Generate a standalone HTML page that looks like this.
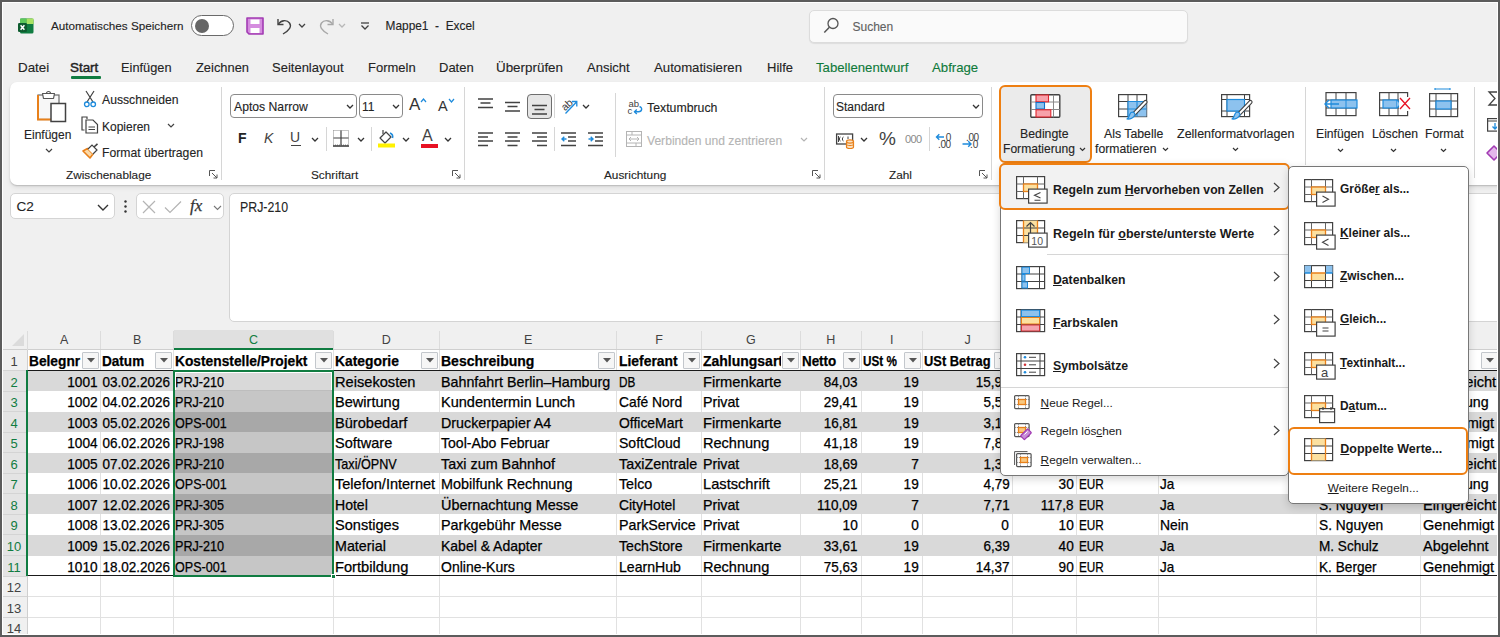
<!DOCTYPE html>
<html><head><meta charset="utf-8">
<style>
*{box-sizing:border-box;margin:0;padding:0}
html,body{width:1500px;height:637px;overflow:hidden;background:#F0F0F0;font-family:"Liberation Sans",sans-serif;color:#242424}
.a{position:absolute;white-space:nowrap}
.t12{font-size:12px;line-height:16px}
.t13{font-size:13px;line-height:15px}
svg{position:absolute;overflow:visible}
.g .a{-webkit-text-stroke:0.25px currentColor}
.t12,.tab,.glab{-webkit-text-stroke:0.12px currentColor}
#frame{position:absolute;left:0;top:0;width:1500px;height:637px;border:2px solid #5c5c5c;z-index:100;pointer-events:none}
#frame:after{content:"";position:absolute;left:0;top:0;right:0;bottom:0;border:1px solid #fff}
.tab{position:absolute;top:59px;font-size:13px;line-height:17px;color:#242424}
.rib{position:absolute;left:9.5px;top:82px;width:1520px;height:103px;background:#fff;border-radius:7px;box-shadow:0 1px 1.5px rgba(0,0,0,.18),0 3px 5px rgba(0,0,0,.07)}
.sep{position:absolute;width:1px;background:#D6D6D6}
.glab{position:absolute;top:168px;font-size:11.8px;line-height:15px;color:#242424}
.chev{position:absolute}
</style></head><body>
<div id="frame"></div>

<!-- ===== TITLE BAR ===== -->
<svg style="left:18px;top:18px" width="16" height="16" viewBox="0 0 16 16">
  <rect x="2" y="0.5" width="13.5" height="15" rx="1.5" fill="#107C41"/>
  <rect x="2" y="0.5" width="6.5" height="5.5" fill="#5CC85A"/>
  <rect x="8.5" y="0.5" width="7" height="5.5" fill="#A9E364"/>
  <rect x="8.5" y="6" width="7" height="9.5" fill="#21A366" opacity="0"/>
  <rect x="0" y="5" width="9" height="9" rx="1.3" fill="#0E5C2F"/>
  <path d="M2.6 7.2 L6.4 11.8 M6.4 7.2 L2.6 11.8" stroke="#fff" stroke-width="1.5"/>
</svg>
<div class="a t12" style="left:51px;top:18px;font-size:11.7px">Automatisches Speichern</div>
<div class="a" style="left:191px;top:15px;width:43px;height:21px;border:1.3px solid #6a6a6a;border-radius:11px;background:#fff"></div>
<div class="a" style="left:195px;top:18.5px;width:14px;height:14px;border-radius:7px;background:#666"></div>
<!-- save -->
<svg style="left:246px;top:17px" width="18" height="18" viewBox="0 0 18 18">
  <path d="M1 1 H17 V17 H3 L1 15 Z" fill="#D58CDF" stroke="#A23BB3" stroke-width="1.6" stroke-linejoin="round"/>
  <rect x="4.5" y="2.5" width="9" height="4.5" fill="#fff"/>
  <rect x="4.5" y="11" width="9" height="5" fill="#fff"/>
</svg>
<!-- undo -->
<svg style="left:276px;top:17px" width="18" height="18" viewBox="0 0 18 18">
  <path d="M2 2 V7.5 H7.5" fill="none" stroke="#424242" stroke-width="1.4"/>
  <path d="M2.5 7 C5 3 11 2.5 13.5 6 C16 9.5 13.5 13 7 17" fill="none" stroke="#424242" stroke-width="1.4"/>
</svg>
<svg style="left:298px;top:23px" width="8" height="5" viewBox="0 0 8 5"><path d="M1 1 L4 4 L7 1" fill="none" stroke="#424242" stroke-width="1.3"/></svg>
<!-- redo -->
<svg style="left:317px;top:17px" width="18" height="18" viewBox="0 0 18 18">
  <path d="M16 2 V7.5 H10.5" fill="none" stroke="#A8A8A8" stroke-width="1.4"/>
  <path d="M15.5 7 C13 3 7 2.5 4.5 6 C2 9.5 4.5 13 11 17" fill="none" stroke="#A8A8A8" stroke-width="1.4"/>
</svg>
<svg style="left:338px;top:23px" width="8" height="5" viewBox="0 0 8 5"><path d="M1 1 L4 4 L7 1" fill="none" stroke="#B8B8B8" stroke-width="1.3"/></svg>
<svg style="left:360px;top:22px" width="10" height="9" viewBox="0 0 10 9"><path d="M1 1 H9" stroke="#424242" stroke-width="1.3"/><path d="M1.5 3.5 L5 7 L8.5 3.5" fill="none" stroke="#424242" stroke-width="1.3"/></svg>
<div class="a t12" style="left:385.5px;top:18px;font-size:11.9px">Mappe1&nbsp; -&nbsp; Excel</div>
<!-- search -->
<div class="a" style="left:809px;top:10px;width:379px;height:33px;background:#FAFAFA;border:1px solid #DCDCDC;border-radius:5px;box-shadow:0 1px 1px rgba(0,0,0,.08)"></div>
<svg style="left:823px;top:17px" width="16" height="17" viewBox="0 0 16 17"><circle cx="10" cy="6.5" r="5" fill="none" stroke="#555" stroke-width="1.3"/><path d="M6.4 10.2 L1.3 15.5" stroke="#555" stroke-width="1.5"/></svg>
<div class="a t12" style="left:852.5px;top:19px;color:#616161;font-size:12px">Suchen</div>

<!-- ===== TABS ===== -->
<div class="tab" style="left:18px;font-size:13.4px">Datei</div>
<div class="tab" style="left:70px;font-size:13.4px;-webkit-text-stroke:0.45px currentColor">Start</div>
<div class="a" style="left:71px;top:76px;width:30px;height:2.5px;background:#107C41;border-radius:1px"></div>
<div class="tab" style="left:121px;font-size:12.8px">Einfügen</div>
<div class="tab" style="left:196px;font-size:12.9px">Zeichnen</div>
<div class="tab" style="left:272px;font-size:13px">Seitenlayout</div>
<div class="tab" style="left:368px;font-size:13px">Formeln</div>
<div class="tab" style="left:439px;font-size:13px">Daten</div>
<div class="tab" style="left:496px;font-size:13.4px">Überprüfen</div>
<div class="tab" style="left:587px;font-size:13px">Ansicht</div>
<div class="tab" style="left:654px;font-size:13.2px">Automatisieren</div>
<div class="tab" style="left:767px;font-size:13px">Hilfe</div>
<div class="tab" style="left:816px;font-size:13.2px;color:#0E7A3A">Tabellenentwurf</div>
<div class="tab" style="left:932px;font-size:13.2px;color:#0E7A3A">Abfrage</div>

<!-- ===== RIBBON ===== -->
<div class="rib"></div>
<!-- Zwischenablage -->
<svg style="left:36px;top:89px" width="31" height="34" viewBox="0 0 31 34">
  <rect x="2" y="6" width="21" height="24.5" fill="#F7F7F7" stroke="#6a6a6a" stroke-width="1.2"/>
  <path d="M2 6 V30.5 H15" fill="none" stroke="#E8801A" stroke-width="2"/>
  <path d="M6.5 4.5 H18.5 L17.5 9.5 H7.5 Z" fill="#fff" stroke="#555" stroke-width="1.2" stroke-linejoin="round"/>
  <path d="M10.5 4.5 A2 2 0 0 1 14.5 4.5" fill="none" stroke="#555" stroke-width="1.2"/>
  <rect x="15" y="14.5" width="14.5" height="18" fill="#fff" stroke="#424242" stroke-width="1.5"/>
</svg>
<div class="a t12" style="left:24px;top:127px;font-size:12px">Einfügen</div>
<svg class="chev" style="left:45px;top:148px" width="8" height="5" viewBox="0 0 8 5"><path d="M1 1 L4 4 L7 1" fill="none" stroke="#424242" stroke-width="1.2"/></svg>
<svg style="left:83px;top:90px" width="14" height="18" viewBox="0 0 14 18">
  <path d="M3 1 L10 12 M11 1 L4 12" stroke="#424242" stroke-width="1.2"/>
  <circle cx="3.8" cy="14.3" r="2.3" fill="none" stroke="#1E8BDC" stroke-width="1.3"/>
  <circle cx="10.2" cy="14.3" r="2.3" fill="none" stroke="#1E8BDC" stroke-width="1.3"/>
</svg>
<div class="a t12" style="left:102px;top:92px;font-size:12.2px">Ausschneiden</div>
<svg style="left:81px;top:116px" width="18" height="18" viewBox="0 0 18 18">
  <path d="M6 3 V1 H1 V14 H3.5" fill="none" stroke="#424242" stroke-width="1.2"/>
  <path d="M5 4 H12 L16.5 8.5 V17 H5 Z" fill="#fff" stroke="#424242" stroke-width="1.2"/>
  <path d="M7.5 11 H14 M7.5 13.5 H14" stroke="#424242" stroke-width="1"/>
</svg>
<div class="a t12" style="left:102px;top:119px">Kopieren</div>
<svg class="chev" style="left:167px;top:123px" width="8" height="5" viewBox="0 0 8 5"><path d="M1 1 L4 4 L7 1" fill="none" stroke="#424242" stroke-width="1.2"/></svg>
<svg style="left:82px;top:143px" width="17" height="16" viewBox="0 0 17 16">
  <path d="M1 8 L8 15 L11 11 L5.5 5.5 Z" fill="#FBD9A8" stroke="#E8801A" stroke-width="1.6" stroke-linejoin="round"/>
  <path d="M6 6 L10 2 L15 7 L11 11" fill="#fff" stroke="#424242" stroke-width="1.2"/>
  <path d="M12 4 L15.5 0.8" stroke="#424242" stroke-width="1.6"/>
</svg>
<div class="a t12" style="left:102px;top:145px;font-size:12.2px">Format übertragen</div>
<div class="glab" style="left:66px">Zwischenablage</div>
<svg style="left:209px;top:170px" width="9" height="9" viewBox="0 0 9 9"><path d="M0.5 6 V0.5 H6 M3 3 L8 8 M8 4.5 V8 H4.5" fill="none" stroke="#555" stroke-width="1"/></svg>
<div class="sep" style="left:221px;top:87px;height:93px"></div>

<!-- Schriftart -->
<div class="a" style="left:230px;top:94px;width:127px;height:24px;border:1px solid #8a8a8a;border-radius:4px;background:#fff"></div>
<div class="a t12" style="left:234px;top:99px;font-size:12.2px">Aptos Narrow</div>
<svg class="chev" style="left:346px;top:104px" width="8" height="5" viewBox="0 0 8 5"><path d="M1 1 L4 4 L7 1" fill="none" stroke="#333" stroke-width="1.3"/></svg>
<div class="a" style="left:359px;top:94px;width:44px;height:24px;border:1px solid #8a8a8a;border-radius:4px;background:#fff"></div>
<div class="a t12" style="left:362px;top:99px">11</div>
<svg class="chev" style="left:392px;top:104px" width="8" height="5" viewBox="0 0 8 5"><path d="M1 1 L4 4 L7 1" fill="none" stroke="#333" stroke-width="1.3"/></svg>
<div class="a" style="left:409px;top:95px;font-size:17px;line-height:19px;color:#333">A</div>
<svg style="left:420px;top:98px" width="7" height="5" viewBox="0 0 7 5"><path d="M1 4 L3.5 1 L6 4" fill="none" stroke="#1E8BDC" stroke-width="1.2"/></svg>
<div class="a" style="left:438px;top:98px;font-size:14.5px;line-height:16px;color:#333">A</div>
<svg style="left:448px;top:98px" width="7" height="5" viewBox="0 0 7 5"><path d="M1 1 L3.5 4 L6 1" fill="none" stroke="#1E8BDC" stroke-width="1.2"/></svg>
<div class="a" style="left:238px;top:130px;font-size:14px;line-height:16px;font-weight:bold;color:#242424">F</div>
<div class="a" style="left:264px;top:130px;font-size:14px;line-height:16px;font-style:italic;color:#424242">K</div>
<div class="a" style="left:290px;top:129px;font-size:14px;line-height:16px;color:#424242">U</div>
<div class="a" style="left:291px;top:145px;width:10px;height:1.3px;background:#424242"></div>
<svg class="chev" style="left:311px;top:137px" width="8" height="5" viewBox="0 0 8 5"><path d="M1 1 L4 4 L7 1" fill="none" stroke="#333" stroke-width="1.3"/></svg>
<div class="sep" style="left:326px;top:127px;height:24px"></div>
<svg style="left:333px;top:130px" width="16" height="17" viewBox="0 0 16 17">
  <path d="M0.5 0.5 H15.5 V15 H0.5 Z" fill="none" stroke="#8a8a8a" stroke-width="1" stroke-dasharray="1 1"/>
  <path d="M8 0.5 V15 M0.5 8 H15.5" stroke="#424242" stroke-width="1.2"/>
  <path d="M0 16 H16" stroke="#424242" stroke-width="1.6"/>
</svg>
<svg class="chev" style="left:357px;top:137px" width="8" height="5" viewBox="0 0 8 5"><path d="M1 1 L4 4 L7 1" fill="none" stroke="#333" stroke-width="1.3"/></svg>
<div class="sep" style="left:371px;top:127px;height:24px"></div>
<svg style="left:378px;top:129px" width="17" height="19" viewBox="0 0 17 19">
  <path d="M2 9 L8 3 L13 8 L7 14 Z" fill="#fff" stroke="#424242" stroke-width="1.2" stroke-linejoin="round"/>
  <path d="M5 5 L5 1" stroke="#424242" stroke-width="1.2"/>
  <path d="M12 4 C14.5 5 15 7 14.5 9" fill="none" stroke="#1E8BDC" stroke-width="1.6"/>
  <rect x="0" y="14.5" width="17" height="4" fill="#FFF100"/>
</svg>
<svg class="chev" style="left:402px;top:137px" width="8" height="5" viewBox="0 0 8 5"><path d="M1 1 L4 4 L7 1" fill="none" stroke="#333" stroke-width="1.3"/></svg>
<div class="a" style="left:422px;top:127px;font-size:16px;line-height:18px;color:#424242">A</div>
<div class="a" style="left:421px;top:143.5px;width:17px;height:4px;background:#E81123"></div>
<svg class="chev" style="left:444px;top:137px" width="8" height="5" viewBox="0 0 8 5"><path d="M1 1 L4 4 L7 1" fill="none" stroke="#333" stroke-width="1.3"/></svg>
<div class="glab" style="left:311px">Schriftart</div>
<svg style="left:452px;top:170px" width="9" height="9" viewBox="0 0 9 9"><path d="M0.5 6 V0.5 H6 M3 3 L8 8 M8 4.5 V8 H4.5" fill="none" stroke="#555" stroke-width="1"/></svg>
<div class="sep" style="left:464px;top:87px;height:93px"></div>

<!-- Ausrichtung -->
<svg style="left:478px;top:98px" width="16" height="12" viewBox="0 0 16 12"><path d="M0 1 H15 M2.5 5 H12.5 M0 9.5 H15" stroke="#424242" stroke-width="1.4"/></svg>
<svg style="left:505px;top:101px" width="16" height="12" viewBox="0 0 16 12"><path d="M0 1.5 H15 M2.5 5.5 H12.5 M0 10 H15" stroke="#424242" stroke-width="1.4"/></svg>
<div class="a" style="left:527px;top:94px;width:25px;height:25px;border:1.3px solid #6e6e6e;border-radius:4px;background:#E6E6E6"></div>
<svg style="left:532px;top:104px" width="16" height="12" viewBox="0 0 16 12"><path d="M0 1.5 H15 M2.5 5.5 H12.5 M0 10 H15" stroke="#424242" stroke-width="1.4"/></svg>
<div class="sep" style="left:554px;top:94px;height:24px"></div>
<svg style="left:560px;top:97px" width="20" height="18" viewBox="0 0 20 18">
  <text x="1" y="12" font-size="10.5" font-family="Liberation Sans" fill="#424242" transform="rotate(-42 6 8)">ab</text>
  <path d="M5.5 16.5 L16.5 5 M12 4.5 H16.8 V9.5" fill="none" stroke="#1E8BDC" stroke-width="1.3"/>
</svg>
<svg class="chev" style="left:582px;top:104px" width="8" height="5" viewBox="0 0 8 5"><path d="M1 1 L4 4 L7 1" fill="none" stroke="#333" stroke-width="1.3"/></svg>
<svg style="left:478px;top:131.5px" width="16" height="15" viewBox="0 0 16 15"><path d="M0 1 H15 M0 5 H10 M0 9 H15 M0 13.5 H10" stroke="#424242" stroke-width="1.4"/></svg>
<svg style="left:505px;top:131.5px" width="16" height="15" viewBox="0 0 16 15"><path d="M0 1 H15 M2.5 5 H12.5 M0 9 H15 M2.5 13.5 H12.5" stroke="#424242" stroke-width="1.4"/></svg>
<svg style="left:532px;top:131.5px" width="16" height="15" viewBox="0 0 16 15"><path d="M0 1 H15 M5 5 H15 M0 9 H15 M5 13.5 H15" stroke="#424242" stroke-width="1.4"/></svg>
<div class="sep" style="left:554px;top:127px;height:24px"></div>
<svg style="left:561px;top:131.5px" width="16" height="15" viewBox="0 0 16 15"><path d="M0 1 H15 M7 5 H15 M7 9 H15 M0 13.5 H15" stroke="#424242" stroke-width="1.4"/><path d="M5.5 7 H1 M3.3 4.8 L1 7 L3.3 9.2" fill="none" stroke="#1E8BDC" stroke-width="1.4"/></svg>
<svg style="left:588px;top:131.5px" width="16" height="15" viewBox="0 0 16 15"><path d="M0 1 H15 M7 5 H15 M7 9 H15 M0 13.5 H15" stroke="#424242" stroke-width="1.4"/><path d="M0.5 7 H5 M2.7 4.8 L5 7 L2.7 9.2" fill="none" stroke="#1E8BDC" stroke-width="1.4"/></svg>
<div class="sep" style="left:615px;top:93px;height:64px"></div>
<svg style="left:627px;top:99px" width="17" height="17" viewBox="0 0 17 17">
  <text x="1.5" y="7.8" font-size="9.5" font-family="Liberation Sans" fill="#424242">ab</text>
  <text x="0.5" y="15.2" font-size="9.5" font-family="Liberation Sans" fill="#424242">c</text>
  <path d="M7.5 12.8 H11.5 C15.5 12.8 15.5 8 12.5 7.8" fill="none" stroke="#1E8BDC" stroke-width="1.4"/>
  <path d="M9.8 10.5 L7.5 12.8 L9.8 15.1" fill="none" stroke="#1E8BDC" stroke-width="1.4"/>
</svg>
<div class="a t12" style="left:647px;top:100px;font-size:12.3px">Textumbruch</div>
<svg style="left:626px;top:131px" width="16" height="16" viewBox="0 0 16 16">
  <rect x="0.5" y="0.5" width="15" height="15" fill="none" stroke="#B4B4B4" stroke-width="1"/>
  <path d="M0.5 4 H15.5 M0.5 12 H15.5 M6 0.5 V4 M10 12 V15.5" stroke="#B4B4B4" stroke-width="1"/>
  <path d="M3 8 H13 M5 6 L3 8 L5 10 M11 6 L13 8 L11 10" fill="none" stroke="#B4B4B4" stroke-width="1"/>
</svg>
<div class="a t12" style="left:647px;top:133px;color:#B4B4B4;font-size:12.1px">Verbinden und zentrieren</div>
<svg class="chev" style="left:800px;top:137px" width="8" height="5" viewBox="0 0 8 5"><path d="M1 1 L4 4 L7 1" fill="none" stroke="#B4B4B4" stroke-width="1.2"/></svg>
<div class="glab" style="left:604px">Ausrichtung</div>
<svg style="left:812px;top:170px" width="9" height="9" viewBox="0 0 9 9"><path d="M0.5 6 V0.5 H6 M3 3 L8 8 M8 4.5 V8 H4.5" fill="none" stroke="#555" stroke-width="1"/></svg>
<div class="sep" style="left:824px;top:87px;height:93px"></div>

<!-- Zahl -->
<div class="a" style="left:833px;top:94px;width:150px;height:24px;border:1px solid #8a8a8a;border-radius:4px;background:#fff"></div>
<div class="a t12" style="left:836px;top:99px">Standard</div>
<svg class="chev" style="left:972px;top:104px" width="8" height="5" viewBox="0 0 8 5"><path d="M1 1 L4 4 L7 1" fill="none" stroke="#333" stroke-width="1.3"/></svg>
<svg style="left:836px;top:133px" width="19" height="16" viewBox="0 0 19 16">
  <rect x="0.6" y="1" width="16" height="10" fill="#fff" stroke="#424242" stroke-width="1.3"/>
  <path d="M2.5 3 V9 M4.5 4 C3 4 3 8 4.5 8 M7.5 4 C6 4 6 8 7.5 8 M12 3.5 V6" fill="none" stroke="#424242" stroke-width="1"/>
  <path d="M10.5 8.5 V14 C10.5 16 17.5 16 17.5 14 V8.5" fill="#FBE3C4" stroke="#E8801A" stroke-width="1.2"/>
  <ellipse cx="14" cy="8.5" rx="3.5" ry="1.6" fill="#FBE3C4" stroke="#E8801A" stroke-width="1.2"/>
  <path d="M10.5 11.3 C10.5 13 17.5 13 17.5 11.3" fill="none" stroke="#E8801A" stroke-width="1"/>
</svg>
<svg class="chev" style="left:860px;top:137px" width="8" height="5" viewBox="0 0 8 5"><path d="M1 1 L4 4 L7 1" fill="none" stroke="#333" stroke-width="1.3"/></svg>
<div class="a" style="left:879px;top:128px;font-size:19px;line-height:21px;color:#424242">%</div>
<div class="a" style="left:905px;top:134px;font-size:11px;line-height:11px;color:#8a8a8a;letter-spacing:-0.6px">000</div>
<div class="sep" style="left:929px;top:127px;height:24px"></div>
<svg style="left:935px;top:132px" width="18" height="16" viewBox="0 0 18 16">
  <path d="M9 5 H1.5 M4.3 2.2 L1.5 5 L4.3 7.8" fill="none" stroke="#1E8BDC" stroke-width="1.4"/>
  <text x="8" y="8.5" font-size="10" font-family="Liberation Sans" fill="#424242">.0</text>
  <text x="3" y="16" font-size="10" font-family="Liberation Sans" fill="#424242" letter-spacing="-0.4">.00</text>
</svg>
<svg style="left:962px;top:132px" width="18" height="16" viewBox="0 0 18 16">
  <text x="4" y="8.5" font-size="10" font-family="Liberation Sans" fill="#424242" letter-spacing="-0.4">.00</text>
  <path d="M0.5 12 H9 M6.2 9.2 L9 12 L6.2 14.8" fill="none" stroke="#1E8BDC" stroke-width="1.4"/>
  <text x="8" y="16" font-size="10" font-family="Liberation Sans" fill="#424242">.0</text>
</svg>
<div class="glab" style="left:889px">Zahl</div>
<svg style="left:979px;top:170px" width="9" height="9" viewBox="0 0 9 9"><path d="M0.5 6 V0.5 H6 M3 3 L8 8 M8 4.5 V8 H4.5" fill="none" stroke="#555" stroke-width="1"/></svg>
<div class="sep" style="left:991px;top:87px;height:93px"></div>

<!-- Formatvorlagen -->
<div class="a" style="left:999px;top:84.5px;width:93px;height:78px;border:2.5px solid #EE7F12;border-radius:6px;background:#EBEBEB"></div>
<svg style="left:1030px;top:93.5px" width="31" height="24" viewBox="0 0 31 24">
  <rect x="0.8" y="0.8" width="29" height="22.5" rx="1" fill="#fff" stroke="#424242" stroke-width="1.4"/>
  <path d="M0.8 8 H29.8 M0.8 15.5 H29.8 M23.5 0.8 V23.3" stroke="#8a8a8a" stroke-width="1"/>
  <rect x="6" y="1" width="12.5" height="6.8" fill="#F7A1AA" stroke="#E0262E" stroke-width="1.1"/>
  <rect x="6" y="8.5" width="8.5" height="6.5" fill="#8DC2EE" stroke="#1570C8" stroke-width="1.1"/>
  <rect x="6" y="15.8" width="14.8" height="7.2" fill="#F7A1AA" stroke="#E0262E" stroke-width="1.1"/>
</svg>
<div class="a t12" style="left:1020px;top:126px;font-size:12.3px">Bedingte</div>
<div class="a t12" style="left:1003px;top:141px;font-size:12.1px">Formatierung</div>
<svg class="chev" style="left:1079px;top:147px" width="7" height="5" viewBox="0 0 7 5"><path d="M1 1 L3.5 3.5 L6 1" fill="none" stroke="#333" stroke-width="1.2"/></svg>
<svg style="left:1118px;top:94px" width="32" height="29" viewBox="0 0 32 29">
  <rect x="0.6" y="0.6" width="28" height="22" fill="#fff" stroke="#424242" stroke-width="1.2"/>
  <path d="M10 0.6 V22.6 M19 0.6 V22.6 M0.6 7.5 H28.6 M0.6 15 H28.6" stroke="#424242" stroke-width="1"/>
  <rect x="10" y="7.5" width="18.5" height="15" fill="#8DC2EE"/>
  <path d="M10 22.6 V7.5 H28.6 M19 7.5 V22.6 M10 15 H28.6" fill="none" stroke="#1E8BDC" stroke-width="1.1"/>
  <path d="M27.5 8 L16 20" stroke="#424242" stroke-width="4.2" stroke-linecap="round"/>
  <path d="M27.5 8 L16 20" stroke="#fff" stroke-width="2" stroke-linecap="round"/>
  <path d="M9 25 C12 25.5 16 24 17 20.5 C16.5 17.5 13 17.5 12 20 C11.3 22 10.5 24 9 25 Z" fill="#8DC2EE" stroke="#1E8BDC" stroke-width="1.2" stroke-linejoin="round"/>
</svg>
<div class="a t12" style="left:1104px;top:126px;font-size:12.3px">Als Tabelle</div>
<div class="a t12" style="left:1095px;top:141px;font-size:12.2px">formatieren</div>
<svg class="chev" style="left:1162px;top:147px" width="7" height="5" viewBox="0 0 7 5"><path d="M1 1 L3.5 3.5 L6 1" fill="none" stroke="#333" stroke-width="1.2"/></svg>
<svg style="left:1221px;top:94px" width="33" height="29" viewBox="0 0 33 29">
  <rect x="0.6" y="0.6" width="28" height="22" fill="#fff" stroke="#424242" stroke-width="1.2"/>
  <path d="M6 0.6 V22.6 M23.5 0.6 V22.6 M0.6 5.5 H28.6 M0.6 17 H28.6" stroke="#424242" stroke-width="1"/>
  <rect x="6" y="5.5" width="17.5" height="11.5" fill="#8DC2EE" stroke="#1E8BDC" stroke-width="1.2"/>
  <path d="M29.5 8 L18 20" stroke="#424242" stroke-width="4.2" stroke-linecap="round"/>
  <path d="M29.5 8 L18 20" stroke="#fff" stroke-width="2" stroke-linecap="round"/>
  <path d="M11 25 C14 25.5 18 24 19 20.5 C18.5 17.5 15 17.5 14 20 C13.3 22 12.5 24 11 25 Z" fill="#8DC2EE" stroke="#1E8BDC" stroke-width="1.2" stroke-linejoin="round"/>
</svg>
<div class="a t12" style="left:1177px;top:126px;font-size:12.5px">Zellenformatvorlagen</div>
<svg class="chev" style="left:1232px;top:147px" width="7" height="5" viewBox="0 0 7 5"><path d="M1 1 L3.5 3.5 L6 1" fill="none" stroke="#333" stroke-width="1.2"/></svg>
<div class="sep" style="left:1305px;top:87px;height:78px"></div>

<!-- Zellen -->
<svg style="left:1323px;top:92px" width="36" height="25" viewBox="0 0 36 25">
  <rect x="3" y="0.6" width="30" height="23" fill="none" stroke="#424242" stroke-width="1.2"/>
  <path d="M13 0.6 V23.6 M23 0.6 V23.6 M3 8 H33 M3 16 H33" stroke="#424242" stroke-width="1"/>
  <rect x="8" y="8" width="26" height="8" fill="#8DC2EE" stroke="#1E8BDC" stroke-width="1.2"/>
  <path d="M23 8 V16" stroke="#1E8BDC" stroke-width="1"/>
  <path d="M16 12 H2 M6 8 L2 12 L6 16" fill="#fff" stroke="#1E8BDC" stroke-width="1.4"/>
</svg>
<div class="a t12" style="left:1316px;top:126px;font-size:12.2px">Einfügen</div>
<svg class="chev" style="left:1337px;top:148px" width="7" height="5" viewBox="0 0 7 5"><path d="M1 1 L3.5 3.5 L6 1" fill="none" stroke="#333" stroke-width="1.2"/></svg>
<svg style="left:1379px;top:92px" width="32" height="25" viewBox="0 0 32 25">
  <rect x="0.6" y="0.6" width="28" height="23" fill="none" stroke="#424242" stroke-width="1.2"/>
  <path d="M10 0.6 V23.6 M19 0.6 V23.6 M0.6 8 H28.6 M0.6 16 H28.6" stroke="#424242" stroke-width="1"/>
  <rect x="4" y="8" width="14" height="8" fill="#8DC2EE" stroke="#1E8BDC" stroke-width="1.2"/>
  <path d="M18 8 L22 12 L18 16" fill="#8DC2EE" stroke="#1E8BDC" stroke-width="1.2"/>
  <rect x="20" y="5" width="12" height="14" fill="#fff"/>
  <path d="M21 6 L31 17 M31 6 L21 17" stroke="#E81123" stroke-width="1.3"/>
</svg>
<div class="a t12" style="left:1372px;top:126px;font-size:12.2px">Löschen</div>
<svg class="chev" style="left:1390px;top:148px" width="7" height="5" viewBox="0 0 7 5"><path d="M1 1 L3.5 3.5 L6 1" fill="none" stroke="#333" stroke-width="1.2"/></svg>
<svg style="left:1429px;top:88px" width="30" height="29" viewBox="0 0 30 29">
  <path d="M6 1 H21 M6 0 V2 M21 0 V2" stroke="#1E8BDC" stroke-width="1.1"/>
  <rect x="0.6" y="5.6" width="28" height="23" fill="none" stroke="#424242" stroke-width="1.2"/>
  <path d="M7 5.6 V28.6 M22 5.6 V28.6 M0.6 13 H28.6 M0.6 21 H28.6" stroke="#424242" stroke-width="1"/>
  <rect x="7" y="13" width="15" height="8" fill="#8DC2EE" stroke="#1E8BDC" stroke-width="1.2"/>
</svg>
<div class="a t12" style="left:1425px;top:126px;font-size:12.2px">Format</div>
<svg class="chev" style="left:1440px;top:148px" width="7" height="5" viewBox="0 0 7 5"><path d="M1 1 L3.5 3.5 L6 1" fill="none" stroke="#333" stroke-width="1.2"/></svg>
<div class="sep" style="left:1474px;top:87px;height:91px"></div>
<!-- Bearbeiten -->
<svg style="left:1488px;top:91px" width="14" height="15" viewBox="0 0 14 15"><path d="M13 1 H1 L7 7.5 L1 14 H13" fill="none" stroke="#424242" stroke-width="1.3"/></svg>
<svg style="left:1487px;top:118px" width="14" height="14" viewBox="0 0 14 14"><rect x="0.6" y="0.6" width="14" height="12.5" fill="none" stroke="#424242" stroke-width="1.2"/><path d="M0.6 3 H14" stroke="#424242" stroke-width="1"/><path d="M8 5 V11 M5.5 8.5 L8 11 L10.5 8.5" fill="none" stroke="#1E8BDC" stroke-width="1.3"/></svg>
<svg style="left:1486px;top:144px" width="16" height="16" viewBox="0 0 16 16"><path d="M1 9 L8 2 L15 9 L8 16 Z" fill="#E3B6EA" stroke="#A23BB3" stroke-width="1.6" stroke-linejoin="round"/></svg>




<!--GRID-->
<div class="g">
<div class="a" style="left:10px;top:193px;width:104.5px;height:26px;background:#fff;border:1px solid #D4D4D4;border-radius:5px"></div>
<div class="a" style="left:16.5px;top:199px;font-size:13.6px;line-height:16px;color:#242424;-webkit-text-stroke:0.1px">C2</div>
<svg style="left:97px;top:204px" width="12" height="7" viewBox="0 0 12 7"><path d="M1 1 L6 6 L11 1" fill="none" stroke="#333" stroke-width="1.4"/></svg>
<svg style="left:124px;top:200px" width="3" height="13" viewBox="0 0 3 13"><circle cx="1.5" cy="1.5" r="1.2" fill="#333"/><circle cx="1.5" cy="6.5" r="1.2" fill="#333"/><circle cx="1.5" cy="11.5" r="1.2" fill="#333"/></svg>
<div class="a" style="left:135.5px;top:193px;width:88px;height:26px;background:#fff;border:1px solid #D4D4D4;border-radius:5px"></div>
<svg style="left:142px;top:200px" width="14" height="14" viewBox="0 0 14 14"><path d="M1 1 L13 13 M13 1 L1 13" stroke="#B4B4B4" stroke-width="1.2"/></svg>
<svg style="left:164px;top:200px" width="18" height="14" viewBox="0 0 18 14"><path d="M1 7.5 L6 12.5 L17 1.5" fill="none" stroke="#B4B4B4" stroke-width="1.2"/></svg>
<div class="a" style="left:190px;top:196px;font-family:'Liberation Serif',serif;font-style:italic;font-size:17px;line-height:19px;color:#333">fx</div>
<svg style="left:213px;top:205px" width="9" height="6" viewBox="0 0 9 6"><path d="M1 1 L4.5 4.5 L8 1" fill="none" stroke="#777" stroke-width="1.1"/></svg>
<div class="a" style="left:228.5px;top:193px;width:1300px;height:129px;background:#fff;border:1px solid #D4D4D4;border-radius:5px"></div>
<div class="a" style="left:240px;top:198.5px;font-size:14.2px;line-height:16px;color:#242424;transform:scaleX(0.87);transform-origin:0 0;-webkit-text-stroke:0.1px">PRJ-210</div>
<div class="a" style="left:173.6px;top:330px;width:159.6px;height:19px;background:#E0E0E0"></div>
<svg style="left:12px;top:334px" width="12" height="12" viewBox="0 0 12 12"><path d="M12 0 V12 H0 Z" fill="#DBDBDB"/></svg>
<div class="a" style="left:0;top:349px;width:1500px;height:1px;background:#CFCFCF"></div>
<div class="a" style="left:27px;top:331px;width:1px;height:19px;background:#DCDCDC"></div>
<div class="a" style="left:100.1px;top:331px;width:1px;height:18px;background:#DCDCDC"></div>
<div class="a" style="left:27.5px;top:333px;width:73.1px;text-align:center;font-size:12.5px;line-height:15px;color:#424242;-webkit-text-stroke:0">A</div>
<div class="a" style="left:173.1px;top:331px;width:1px;height:18px;background:#DCDCDC"></div>
<div class="a" style="left:100.6px;top:333px;width:73.0px;text-align:center;font-size:12.5px;line-height:15px;color:#424242;-webkit-text-stroke:0">B</div>
<div class="a" style="left:332.7px;top:331px;width:1px;height:18px;background:#DCDCDC"></div>
<div class="a" style="left:173.6px;top:333px;width:159.6px;text-align:center;font-size:12.5px;line-height:15px;color:#107C41;-webkit-text-stroke:0">C</div>
<div class="a" style="left:439.0px;top:331px;width:1px;height:18px;background:#DCDCDC"></div>
<div class="a" style="left:333.2px;top:333px;width:106.3px;text-align:center;font-size:12.5px;line-height:15px;color:#424242;-webkit-text-stroke:0">D</div>
<div class="a" style="left:616.3px;top:331px;width:1px;height:18px;background:#DCDCDC"></div>
<div class="a" style="left:439.5px;top:333px;width:177.3px;text-align:center;font-size:12.5px;line-height:15px;color:#424242;-webkit-text-stroke:0">E</div>
<div class="a" style="left:700.8px;top:331px;width:1px;height:18px;background:#DCDCDC"></div>
<div class="a" style="left:616.8px;top:333px;width:84.5px;text-align:center;font-size:12.5px;line-height:15px;color:#424242;-webkit-text-stroke:0">F</div>
<div class="a" style="left:799.8px;top:331px;width:1px;height:18px;background:#DCDCDC"></div>
<div class="a" style="left:701.3px;top:333px;width:99.0px;text-align:center;font-size:12.5px;line-height:15px;color:#424242;-webkit-text-stroke:0">G</div>
<div class="a" style="left:860.8px;top:331px;width:1px;height:18px;background:#DCDCDC"></div>
<div class="a" style="left:800.3px;top:333px;width:61.0px;text-align:center;font-size:12.5px;line-height:15px;color:#424242;-webkit-text-stroke:0">H</div>
<div class="a" style="left:921.8px;top:331px;width:1px;height:18px;background:#DCDCDC"></div>
<div class="a" style="left:861.3px;top:333px;width:61.0px;text-align:center;font-size:12.5px;line-height:15px;color:#424242;-webkit-text-stroke:0">I</div>
<div class="a" style="left:1012.3px;top:331px;width:1px;height:18px;background:#DCDCDC"></div>
<div class="a" style="left:922.3px;top:333px;width:90.5px;text-align:center;font-size:12.5px;line-height:15px;color:#424242;-webkit-text-stroke:0">J</div>
<div class="a" style="left:1076.3px;top:331px;width:1px;height:18px;background:#DCDCDC"></div>
<div class="a" style="left:1012.8px;top:333px;width:64.0px;text-align:center;font-size:12.5px;line-height:15px;color:#424242;-webkit-text-stroke:0">K</div>
<div class="a" style="left:1157.5px;top:331px;width:1px;height:18px;background:#DCDCDC"></div>
<div class="a" style="left:1076.8px;top:333px;width:81.2px;text-align:center;font-size:12.5px;line-height:15px;color:#424242;-webkit-text-stroke:0">L</div>
<div class="a" style="left:1316.3px;top:331px;width:1px;height:18px;background:#DCDCDC"></div>
<div class="a" style="left:1158.0px;top:333px;width:158.8px;text-align:center;font-size:12.5px;line-height:15px;color:#424242;-webkit-text-stroke:0">M</div>
<div class="a" style="left:1420.3px;top:331px;width:1px;height:18px;background:#DCDCDC"></div>
<div class="a" style="left:1316.8px;top:333px;width:104.0px;text-align:center;font-size:12.5px;line-height:15px;color:#424242;-webkit-text-stroke:0">N</div>
<div class="a" style="left:1529.5px;top:331px;width:1px;height:18px;background:#DCDCDC"></div>
<div class="a" style="left:173.6px;top:348px;width:159.6px;height:2px;background:#107C41"></div>
<div class="a" style="left:0;top:370.5px;width:27px;height:205.5px;background:#E4E4E4"></div>
<div class="a" style="left:0;top:370.1px;width:27px;height:1px;background:#D4D4D4"></div>
<div class="a" style="left:2px;top:354.0px;width:24px;text-align:center;font-size:13px;line-height:15px;color:#424242;-webkit-text-stroke:0">1</div>
<div class="a" style="left:0;top:390.6px;width:27px;height:1px;background:#D4D4D4"></div>
<div class="a" style="left:2px;top:374.6px;width:24px;text-align:center;font-size:13px;line-height:15px;color:#107C41;-webkit-text-stroke:0">2</div>
<div class="a" style="left:0;top:411.2px;width:27px;height:1px;background:#D4D4D4"></div>
<div class="a" style="left:2px;top:395.1px;width:24px;text-align:center;font-size:13px;line-height:15px;color:#107C41;-webkit-text-stroke:0">3</div>
<div class="a" style="left:0;top:431.7px;width:27px;height:1px;background:#D4D4D4"></div>
<div class="a" style="left:2px;top:415.6px;width:24px;text-align:center;font-size:13px;line-height:15px;color:#107C41;-webkit-text-stroke:0">4</div>
<div class="a" style="left:0;top:452.2px;width:27px;height:1px;background:#D4D4D4"></div>
<div class="a" style="left:2px;top:436.2px;width:24px;text-align:center;font-size:13px;line-height:15px;color:#107C41;-webkit-text-stroke:0">5</div>
<div class="a" style="left:0;top:472.8px;width:27px;height:1px;background:#D4D4D4"></div>
<div class="a" style="left:2px;top:456.8px;width:24px;text-align:center;font-size:13px;line-height:15px;color:#107C41;-webkit-text-stroke:0">6</div>
<div class="a" style="left:0;top:493.4px;width:27px;height:1px;background:#D4D4D4"></div>
<div class="a" style="left:2px;top:477.3px;width:24px;text-align:center;font-size:13px;line-height:15px;color:#107C41;-webkit-text-stroke:0">7</div>
<div class="a" style="left:0;top:513.9px;width:27px;height:1px;background:#D4D4D4"></div>
<div class="a" style="left:2px;top:497.9px;width:24px;text-align:center;font-size:13px;line-height:15px;color:#107C41;-webkit-text-stroke:0">8</div>
<div class="a" style="left:0;top:534.4px;width:27px;height:1px;background:#D4D4D4"></div>
<div class="a" style="left:2px;top:518.4px;width:24px;text-align:center;font-size:13px;line-height:15px;color:#107C41;-webkit-text-stroke:0">9</div>
<div class="a" style="left:0;top:555.0px;width:27px;height:1px;background:#D4D4D4"></div>
<div class="a" style="left:2px;top:539.0px;width:24px;text-align:center;font-size:13px;line-height:15px;color:#107C41;-webkit-text-stroke:0">10</div>
<div class="a" style="left:0;top:575.5px;width:27px;height:1px;background:#D4D4D4"></div>
<div class="a" style="left:2px;top:559.5px;width:24px;text-align:center;font-size:13px;line-height:15px;color:#107C41;-webkit-text-stroke:0">11</div>
<div class="a" style="left:0;top:596.1px;width:27px;height:1px;background:#D4D4D4"></div>
<div class="a" style="left:2px;top:580.0px;width:24px;text-align:center;font-size:13px;line-height:15px;color:#424242;-webkit-text-stroke:0">12</div>
<div class="a" style="left:0;top:616.6px;width:27px;height:1px;background:#D4D4D4"></div>
<div class="a" style="left:2px;top:600.6px;width:24px;text-align:center;font-size:13px;line-height:15px;color:#424242;-webkit-text-stroke:0">13</div>
<div class="a" style="left:0;top:637.2px;width:27px;height:1px;background:#D4D4D4"></div>
<div class="a" style="left:2px;top:621.2px;width:24px;text-align:center;font-size:13px;line-height:15px;color:#424242;-webkit-text-stroke:0">14</div>
<div class="a" style="left:26.5px;top:350px;width:1px;height:290px;background:#CFCFCF"></div>
<div class="a" style="left:26px;top:370px;width:2px;height:206px;background:#107C41"></div>
<div class="a" style="left:28px;top:350px;width:1480px;height:290px;background:#fff"></div>
<div class="a" style="left:28px;top:370.6px;width:1480px;height:20.55px;background:#D9D9D9"></div>
<div class="a" style="left:28px;top:411.6px;width:1480px;height:20.55px;background:#D9D9D9"></div>
<div class="a" style="left:28px;top:452.8px;width:1480px;height:20.55px;background:#D9D9D9"></div>
<div class="a" style="left:28px;top:493.9px;width:1480px;height:20.55px;background:#D9D9D9"></div>
<div class="a" style="left:28px;top:535.0px;width:1480px;height:20.55px;background:#D9D9D9"></div>
<div class="a" style="left:100.1px;top:350.0px;width:1px;height:20.55px;background:#E1E1E1"></div>
<div class="a" style="left:100.1px;top:391.1px;width:1px;height:20.55px;background:#E1E1E1"></div>
<div class="a" style="left:100.1px;top:432.2px;width:1px;height:20.55px;background:#E1E1E1"></div>
<div class="a" style="left:100.1px;top:473.3px;width:1px;height:20.55px;background:#E1E1E1"></div>
<div class="a" style="left:100.1px;top:514.4px;width:1px;height:20.55px;background:#E1E1E1"></div>
<div class="a" style="left:100.1px;top:555.5px;width:1px;height:20.55px;background:#E1E1E1"></div>
<div class="a" style="left:100.1px;top:576.0px;width:1px;height:20.55px;background:#E1E1E1"></div>
<div class="a" style="left:100.1px;top:596.6px;width:1px;height:20.55px;background:#E1E1E1"></div>
<div class="a" style="left:100.1px;top:617.2px;width:1px;height:20.55px;background:#E1E1E1"></div>
<div class="a" style="left:173.1px;top:350.0px;width:1px;height:20.55px;background:#E1E1E1"></div>
<div class="a" style="left:173.1px;top:391.1px;width:1px;height:20.55px;background:#E1E1E1"></div>
<div class="a" style="left:173.1px;top:432.2px;width:1px;height:20.55px;background:#E1E1E1"></div>
<div class="a" style="left:173.1px;top:473.3px;width:1px;height:20.55px;background:#E1E1E1"></div>
<div class="a" style="left:173.1px;top:514.4px;width:1px;height:20.55px;background:#E1E1E1"></div>
<div class="a" style="left:173.1px;top:555.5px;width:1px;height:20.55px;background:#E1E1E1"></div>
<div class="a" style="left:173.1px;top:576.0px;width:1px;height:20.55px;background:#E1E1E1"></div>
<div class="a" style="left:173.1px;top:596.6px;width:1px;height:20.55px;background:#E1E1E1"></div>
<div class="a" style="left:173.1px;top:617.2px;width:1px;height:20.55px;background:#E1E1E1"></div>
<div class="a" style="left:332.7px;top:350.0px;width:1px;height:20.55px;background:#E1E1E1"></div>
<div class="a" style="left:332.7px;top:391.1px;width:1px;height:20.55px;background:#E1E1E1"></div>
<div class="a" style="left:332.7px;top:432.2px;width:1px;height:20.55px;background:#E1E1E1"></div>
<div class="a" style="left:332.7px;top:473.3px;width:1px;height:20.55px;background:#E1E1E1"></div>
<div class="a" style="left:332.7px;top:514.4px;width:1px;height:20.55px;background:#E1E1E1"></div>
<div class="a" style="left:332.7px;top:555.5px;width:1px;height:20.55px;background:#E1E1E1"></div>
<div class="a" style="left:332.7px;top:576.0px;width:1px;height:20.55px;background:#E1E1E1"></div>
<div class="a" style="left:332.7px;top:596.6px;width:1px;height:20.55px;background:#E1E1E1"></div>
<div class="a" style="left:332.7px;top:617.2px;width:1px;height:20.55px;background:#E1E1E1"></div>
<div class="a" style="left:439.0px;top:350.0px;width:1px;height:20.55px;background:#E1E1E1"></div>
<div class="a" style="left:439.0px;top:391.1px;width:1px;height:20.55px;background:#E1E1E1"></div>
<div class="a" style="left:439.0px;top:432.2px;width:1px;height:20.55px;background:#E1E1E1"></div>
<div class="a" style="left:439.0px;top:473.3px;width:1px;height:20.55px;background:#E1E1E1"></div>
<div class="a" style="left:439.0px;top:514.4px;width:1px;height:20.55px;background:#E1E1E1"></div>
<div class="a" style="left:439.0px;top:555.5px;width:1px;height:20.55px;background:#E1E1E1"></div>
<div class="a" style="left:439.0px;top:576.0px;width:1px;height:20.55px;background:#E1E1E1"></div>
<div class="a" style="left:439.0px;top:596.6px;width:1px;height:20.55px;background:#E1E1E1"></div>
<div class="a" style="left:439.0px;top:617.2px;width:1px;height:20.55px;background:#E1E1E1"></div>
<div class="a" style="left:616.3px;top:350.0px;width:1px;height:20.55px;background:#E1E1E1"></div>
<div class="a" style="left:616.3px;top:391.1px;width:1px;height:20.55px;background:#E1E1E1"></div>
<div class="a" style="left:616.3px;top:432.2px;width:1px;height:20.55px;background:#E1E1E1"></div>
<div class="a" style="left:616.3px;top:473.3px;width:1px;height:20.55px;background:#E1E1E1"></div>
<div class="a" style="left:616.3px;top:514.4px;width:1px;height:20.55px;background:#E1E1E1"></div>
<div class="a" style="left:616.3px;top:555.5px;width:1px;height:20.55px;background:#E1E1E1"></div>
<div class="a" style="left:616.3px;top:576.0px;width:1px;height:20.55px;background:#E1E1E1"></div>
<div class="a" style="left:616.3px;top:596.6px;width:1px;height:20.55px;background:#E1E1E1"></div>
<div class="a" style="left:616.3px;top:617.2px;width:1px;height:20.55px;background:#E1E1E1"></div>
<div class="a" style="left:700.8px;top:350.0px;width:1px;height:20.55px;background:#E1E1E1"></div>
<div class="a" style="left:700.8px;top:391.1px;width:1px;height:20.55px;background:#E1E1E1"></div>
<div class="a" style="left:700.8px;top:432.2px;width:1px;height:20.55px;background:#E1E1E1"></div>
<div class="a" style="left:700.8px;top:473.3px;width:1px;height:20.55px;background:#E1E1E1"></div>
<div class="a" style="left:700.8px;top:514.4px;width:1px;height:20.55px;background:#E1E1E1"></div>
<div class="a" style="left:700.8px;top:555.5px;width:1px;height:20.55px;background:#E1E1E1"></div>
<div class="a" style="left:700.8px;top:576.0px;width:1px;height:20.55px;background:#E1E1E1"></div>
<div class="a" style="left:700.8px;top:596.6px;width:1px;height:20.55px;background:#E1E1E1"></div>
<div class="a" style="left:700.8px;top:617.2px;width:1px;height:20.55px;background:#E1E1E1"></div>
<div class="a" style="left:799.8px;top:350.0px;width:1px;height:20.55px;background:#E1E1E1"></div>
<div class="a" style="left:799.8px;top:391.1px;width:1px;height:20.55px;background:#E1E1E1"></div>
<div class="a" style="left:799.8px;top:432.2px;width:1px;height:20.55px;background:#E1E1E1"></div>
<div class="a" style="left:799.8px;top:473.3px;width:1px;height:20.55px;background:#E1E1E1"></div>
<div class="a" style="left:799.8px;top:514.4px;width:1px;height:20.55px;background:#E1E1E1"></div>
<div class="a" style="left:799.8px;top:555.5px;width:1px;height:20.55px;background:#E1E1E1"></div>
<div class="a" style="left:799.8px;top:576.0px;width:1px;height:20.55px;background:#E1E1E1"></div>
<div class="a" style="left:799.8px;top:596.6px;width:1px;height:20.55px;background:#E1E1E1"></div>
<div class="a" style="left:799.8px;top:617.2px;width:1px;height:20.55px;background:#E1E1E1"></div>
<div class="a" style="left:860.8px;top:350.0px;width:1px;height:20.55px;background:#E1E1E1"></div>
<div class="a" style="left:860.8px;top:391.1px;width:1px;height:20.55px;background:#E1E1E1"></div>
<div class="a" style="left:860.8px;top:432.2px;width:1px;height:20.55px;background:#E1E1E1"></div>
<div class="a" style="left:860.8px;top:473.3px;width:1px;height:20.55px;background:#E1E1E1"></div>
<div class="a" style="left:860.8px;top:514.4px;width:1px;height:20.55px;background:#E1E1E1"></div>
<div class="a" style="left:860.8px;top:555.5px;width:1px;height:20.55px;background:#E1E1E1"></div>
<div class="a" style="left:860.8px;top:576.0px;width:1px;height:20.55px;background:#E1E1E1"></div>
<div class="a" style="left:860.8px;top:596.6px;width:1px;height:20.55px;background:#E1E1E1"></div>
<div class="a" style="left:860.8px;top:617.2px;width:1px;height:20.55px;background:#E1E1E1"></div>
<div class="a" style="left:921.8px;top:350.0px;width:1px;height:20.55px;background:#E1E1E1"></div>
<div class="a" style="left:921.8px;top:391.1px;width:1px;height:20.55px;background:#E1E1E1"></div>
<div class="a" style="left:921.8px;top:432.2px;width:1px;height:20.55px;background:#E1E1E1"></div>
<div class="a" style="left:921.8px;top:473.3px;width:1px;height:20.55px;background:#E1E1E1"></div>
<div class="a" style="left:921.8px;top:514.4px;width:1px;height:20.55px;background:#E1E1E1"></div>
<div class="a" style="left:921.8px;top:555.5px;width:1px;height:20.55px;background:#E1E1E1"></div>
<div class="a" style="left:921.8px;top:576.0px;width:1px;height:20.55px;background:#E1E1E1"></div>
<div class="a" style="left:921.8px;top:596.6px;width:1px;height:20.55px;background:#E1E1E1"></div>
<div class="a" style="left:921.8px;top:617.2px;width:1px;height:20.55px;background:#E1E1E1"></div>
<div class="a" style="left:1012.3px;top:350.0px;width:1px;height:20.55px;background:#E1E1E1"></div>
<div class="a" style="left:1012.3px;top:391.1px;width:1px;height:20.55px;background:#E1E1E1"></div>
<div class="a" style="left:1012.3px;top:432.2px;width:1px;height:20.55px;background:#E1E1E1"></div>
<div class="a" style="left:1012.3px;top:473.3px;width:1px;height:20.55px;background:#E1E1E1"></div>
<div class="a" style="left:1012.3px;top:514.4px;width:1px;height:20.55px;background:#E1E1E1"></div>
<div class="a" style="left:1012.3px;top:555.5px;width:1px;height:20.55px;background:#E1E1E1"></div>
<div class="a" style="left:1012.3px;top:576.0px;width:1px;height:20.55px;background:#E1E1E1"></div>
<div class="a" style="left:1012.3px;top:596.6px;width:1px;height:20.55px;background:#E1E1E1"></div>
<div class="a" style="left:1012.3px;top:617.2px;width:1px;height:20.55px;background:#E1E1E1"></div>
<div class="a" style="left:1076.3px;top:350.0px;width:1px;height:20.55px;background:#E1E1E1"></div>
<div class="a" style="left:1076.3px;top:391.1px;width:1px;height:20.55px;background:#E1E1E1"></div>
<div class="a" style="left:1076.3px;top:432.2px;width:1px;height:20.55px;background:#E1E1E1"></div>
<div class="a" style="left:1076.3px;top:473.3px;width:1px;height:20.55px;background:#E1E1E1"></div>
<div class="a" style="left:1076.3px;top:514.4px;width:1px;height:20.55px;background:#E1E1E1"></div>
<div class="a" style="left:1076.3px;top:555.5px;width:1px;height:20.55px;background:#E1E1E1"></div>
<div class="a" style="left:1076.3px;top:576.0px;width:1px;height:20.55px;background:#E1E1E1"></div>
<div class="a" style="left:1076.3px;top:596.6px;width:1px;height:20.55px;background:#E1E1E1"></div>
<div class="a" style="left:1076.3px;top:617.2px;width:1px;height:20.55px;background:#E1E1E1"></div>
<div class="a" style="left:1157.5px;top:350.0px;width:1px;height:20.55px;background:#E1E1E1"></div>
<div class="a" style="left:1157.5px;top:391.1px;width:1px;height:20.55px;background:#E1E1E1"></div>
<div class="a" style="left:1157.5px;top:432.2px;width:1px;height:20.55px;background:#E1E1E1"></div>
<div class="a" style="left:1157.5px;top:473.3px;width:1px;height:20.55px;background:#E1E1E1"></div>
<div class="a" style="left:1157.5px;top:514.4px;width:1px;height:20.55px;background:#E1E1E1"></div>
<div class="a" style="left:1157.5px;top:555.5px;width:1px;height:20.55px;background:#E1E1E1"></div>
<div class="a" style="left:1157.5px;top:576.0px;width:1px;height:20.55px;background:#E1E1E1"></div>
<div class="a" style="left:1157.5px;top:596.6px;width:1px;height:20.55px;background:#E1E1E1"></div>
<div class="a" style="left:1157.5px;top:617.2px;width:1px;height:20.55px;background:#E1E1E1"></div>
<div class="a" style="left:1316.3px;top:350.0px;width:1px;height:20.55px;background:#E1E1E1"></div>
<div class="a" style="left:1316.3px;top:391.1px;width:1px;height:20.55px;background:#E1E1E1"></div>
<div class="a" style="left:1316.3px;top:432.2px;width:1px;height:20.55px;background:#E1E1E1"></div>
<div class="a" style="left:1316.3px;top:473.3px;width:1px;height:20.55px;background:#E1E1E1"></div>
<div class="a" style="left:1316.3px;top:514.4px;width:1px;height:20.55px;background:#E1E1E1"></div>
<div class="a" style="left:1316.3px;top:555.5px;width:1px;height:20.55px;background:#E1E1E1"></div>
<div class="a" style="left:1316.3px;top:576.0px;width:1px;height:20.55px;background:#E1E1E1"></div>
<div class="a" style="left:1316.3px;top:596.6px;width:1px;height:20.55px;background:#E1E1E1"></div>
<div class="a" style="left:1316.3px;top:617.2px;width:1px;height:20.55px;background:#E1E1E1"></div>
<div class="a" style="left:1420.3px;top:350.0px;width:1px;height:20.55px;background:#E1E1E1"></div>
<div class="a" style="left:1420.3px;top:391.1px;width:1px;height:20.55px;background:#E1E1E1"></div>
<div class="a" style="left:1420.3px;top:432.2px;width:1px;height:20.55px;background:#E1E1E1"></div>
<div class="a" style="left:1420.3px;top:473.3px;width:1px;height:20.55px;background:#E1E1E1"></div>
<div class="a" style="left:1420.3px;top:514.4px;width:1px;height:20.55px;background:#E1E1E1"></div>
<div class="a" style="left:1420.3px;top:555.5px;width:1px;height:20.55px;background:#E1E1E1"></div>
<div class="a" style="left:1420.3px;top:576.0px;width:1px;height:20.55px;background:#E1E1E1"></div>
<div class="a" style="left:1420.3px;top:596.6px;width:1px;height:20.55px;background:#E1E1E1"></div>
<div class="a" style="left:1420.3px;top:617.2px;width:1px;height:20.55px;background:#E1E1E1"></div>
<div class="a" style="left:1529.5px;top:350.0px;width:1px;height:20.55px;background:#E1E1E1"></div>
<div class="a" style="left:1529.5px;top:391.1px;width:1px;height:20.55px;background:#E1E1E1"></div>
<div class="a" style="left:1529.5px;top:432.2px;width:1px;height:20.55px;background:#E1E1E1"></div>
<div class="a" style="left:1529.5px;top:473.3px;width:1px;height:20.55px;background:#E1E1E1"></div>
<div class="a" style="left:1529.5px;top:514.4px;width:1px;height:20.55px;background:#E1E1E1"></div>
<div class="a" style="left:1529.5px;top:555.5px;width:1px;height:20.55px;background:#E1E1E1"></div>
<div class="a" style="left:1529.5px;top:576.0px;width:1px;height:20.55px;background:#E1E1E1"></div>
<div class="a" style="left:1529.5px;top:596.6px;width:1px;height:20.55px;background:#E1E1E1"></div>
<div class="a" style="left:1529.5px;top:617.2px;width:1px;height:20.55px;background:#E1E1E1"></div>
<div class="a" style="left:28px;top:596.1px;width:1480px;height:1px;background:#E1E1E1"></div>
<div class="a" style="left:28px;top:616.6px;width:1480px;height:1px;background:#E1E1E1"></div>
<div class="a" style="left:28px;top:637.2px;width:1480px;height:1px;background:#E1E1E1"></div>
<div class="a" style="left:173.6px;top:391.1px;width:159.6px;height:20.55px;background:#C6C6C6"></div>
<div class="a" style="left:173.6px;top:411.6px;width:159.6px;height:20.55px;background:#A8A8A8"></div>
<div class="a" style="left:173.6px;top:432.2px;width:159.6px;height:20.55px;background:#C6C6C6"></div>
<div class="a" style="left:173.6px;top:452.8px;width:159.6px;height:20.55px;background:#A8A8A8"></div>
<div class="a" style="left:173.6px;top:473.3px;width:159.6px;height:20.55px;background:#C6C6C6"></div>
<div class="a" style="left:173.6px;top:493.9px;width:159.6px;height:20.55px;background:#A8A8A8"></div>
<div class="a" style="left:173.6px;top:514.4px;width:159.6px;height:20.55px;background:#C6C6C6"></div>
<div class="a" style="left:173.6px;top:535.0px;width:159.6px;height:20.55px;background:#A8A8A8"></div>
<div class="a" style="left:173.6px;top:555.5px;width:159.6px;height:20.55px;background:#C6C6C6"></div>
<div class="a" style="left:28px;top:369.5px;width:1480px;height:1.5px;background:#1a1a1a"></div>
<div class="a" style="left:28px;top:575.0px;width:1480px;height:1.3px;background:#1a1a1a"></div>
<div class="a" style="left:29.3px;top:353.0px;width:52.3px;overflow:hidden;font-size:14.2px;line-height:16px;font-weight:bold;color:#000"><span style="display:inline-block;transform:scaleX(0.968);transform-origin:0 0">Belegnr</span></div>
<div class="a" style="left:82.1px;top:351.5px;width:17px;height:17.5px;background:#F6F6F6;border:1px solid #C3C7CC;border-radius:1px"></div>
<svg style="left:87.1px;top:358px" width="8" height="5" viewBox="0 0 8 5"><path d="M0 0 H8 L4 4.5 Z" fill="#555"/></svg>
<div class="a" style="left:102.4px;top:353.0px;width:52.2px;overflow:hidden;font-size:14.2px;line-height:16px;font-weight:bold;color:#000"><span style="display:inline-block;transform:scaleX(0.956);transform-origin:0 0">Datum</span></div>
<div class="a" style="left:155.1px;top:351.5px;width:17px;height:17.5px;background:#F6F6F6;border:1px solid #C3C7CC;border-radius:1px"></div>
<svg style="left:160.1px;top:358px" width="8" height="5" viewBox="0 0 8 5"><path d="M0 0 H8 L4 4.5 Z" fill="#555"/></svg>
<div class="a" style="left:175.4px;top:353.0px;width:138.8px;overflow:hidden;font-size:14.2px;line-height:16px;font-weight:bold;color:#000"><span style="display:inline-block;transform:scaleX(0.971);transform-origin:0 0">Kostenstelle/Projekt</span></div>
<div class="a" style="left:314.7px;top:351.5px;width:17px;height:17.5px;background:#F6F6F6;border:1px solid #C3C7CC;border-radius:1px"></div>
<svg style="left:319.7px;top:358px" width="8" height="5" viewBox="0 0 8 5"><path d="M0 0 H8 L4 4.5 Z" fill="#555"/></svg>
<div class="a" style="left:335.0px;top:353.0px;width:85.5px;overflow:hidden;font-size:14.2px;line-height:16px;font-weight:bold;color:#000"><span style="display:inline-block;transform:scaleX(0.976);transform-origin:0 0">Kategorie</span></div>
<div class="a" style="left:421.0px;top:351.5px;width:17px;height:17.5px;background:#F6F6F6;border:1px solid #C3C7CC;border-radius:1px"></div>
<svg style="left:426.0px;top:358px" width="8" height="5" viewBox="0 0 8 5"><path d="M0 0 H8 L4 4.5 Z" fill="#555"/></svg>
<div class="a" style="left:441.3px;top:353.0px;width:156.5px;overflow:hidden;font-size:14.2px;line-height:16px;font-weight:bold;color:#000"><span style="display:inline-block;transform:scaleX(0.987);transform-origin:0 0">Beschreibung</span></div>
<div class="a" style="left:598.3px;top:351.5px;width:17px;height:17.5px;background:#F6F6F6;border:1px solid #C3C7CC;border-radius:1px"></div>
<svg style="left:603.3px;top:358px" width="8" height="5" viewBox="0 0 8 5"><path d="M0 0 H8 L4 4.5 Z" fill="#555"/></svg>
<div class="a" style="left:618.6px;top:353.0px;width:63.7px;overflow:hidden;font-size:14.2px;line-height:16px;font-weight:bold;color:#000"><span style="display:inline-block;transform:scaleX(0.979);transform-origin:0 0">Lieferant</span></div>
<div class="a" style="left:682.8px;top:351.5px;width:17px;height:17.5px;background:#F6F6F6;border:1px solid #C3C7CC;border-radius:1px"></div>
<svg style="left:687.8px;top:358px" width="8" height="5" viewBox="0 0 8 5"><path d="M0 0 H8 L4 4.5 Z" fill="#555"/></svg>
<div class="a" style="left:703.1px;top:353.0px;width:78.2px;overflow:hidden;font-size:14.2px;line-height:16px;font-weight:bold;color:#000"><span style="display:inline-block;transform:scaleX(0.985);transform-origin:0 0">Zahlungsart</span></div>
<div class="a" style="left:781.8px;top:351.5px;width:17px;height:17.5px;background:#F6F6F6;border:1px solid #C3C7CC;border-radius:1px"></div>
<svg style="left:786.8px;top:358px" width="8" height="5" viewBox="0 0 8 5"><path d="M0 0 H8 L4 4.5 Z" fill="#555"/></svg>
<div class="a" style="left:802.1px;top:353.0px;width:40.2px;overflow:hidden;font-size:14.2px;line-height:16px;font-weight:bold;color:#000"><span style="display:inline-block;transform:scaleX(0.944);transform-origin:0 0">Netto</span></div>
<div class="a" style="left:842.8px;top:351.5px;width:17px;height:17.5px;background:#F6F6F6;border:1px solid #C3C7CC;border-radius:1px"></div>
<svg style="left:847.8px;top:358px" width="8" height="5" viewBox="0 0 8 5"><path d="M0 0 H8 L4 4.5 Z" fill="#555"/></svg>
<div class="a" style="left:863.1px;top:353.0px;width:40.2px;overflow:hidden;font-size:14.2px;line-height:16px;font-weight:bold;color:#000"><span style="display:inline-block;transform:scaleX(0.825);transform-origin:0 0">USt %</span></div>
<div class="a" style="left:903.8px;top:351.5px;width:17px;height:17.5px;background:#F6F6F6;border:1px solid #C3C7CC;border-radius:1px"></div>
<svg style="left:908.8px;top:358px" width="8" height="5" viewBox="0 0 8 5"><path d="M0 0 H8 L4 4.5 Z" fill="#555"/></svg>
<div class="a" style="left:924.1px;top:353.0px;width:69.7px;overflow:hidden;font-size:14.2px;line-height:16px;font-weight:bold;color:#000"><span style="display:inline-block;transform:scaleX(0.907);transform-origin:0 0">USt Betrag</span></div>
<div class="a" style="left:994.3px;top:351.5px;width:17px;height:17.5px;background:#F6F6F6;border:1px solid #C3C7CC;border-radius:1px"></div>
<svg style="left:999.3px;top:358px" width="8" height="5" viewBox="0 0 8 5"><path d="M0 0 H8 L4 4.5 Z" fill="#555"/></svg>
<div class="a" style="left:1014.6px;top:353.0px;width:43.2px;overflow:hidden;font-size:14.2px;line-height:16px;font-weight:bold;color:#000"><span style="display:inline-block;transform:scaleX(0.955);transform-origin:0 0">Brutto</span></div>
<div class="a" style="left:1058.3px;top:351.5px;width:17px;height:17.5px;background:#F6F6F6;border:1px solid #C3C7CC;border-radius:1px"></div>
<svg style="left:1063.3px;top:358px" width="8" height="5" viewBox="0 0 8 5"><path d="M0 0 H8 L4 4.5 Z" fill="#555"/></svg>
<div class="a" style="left:1078.6px;top:353.0px;width:60.4px;overflow:hidden;font-size:14.2px;line-height:16px;font-weight:bold;color:#000"><span style="display:inline-block;transform:scaleX(0.959);transform-origin:0 0">Währung</span></div>
<div class="a" style="left:1139.5px;top:351.5px;width:17px;height:17.5px;background:#F6F6F6;border:1px solid #C3C7CC;border-radius:1px"></div>
<svg style="left:1144.5px;top:358px" width="8" height="5" viewBox="0 0 8 5"><path d="M0 0 H8 L4 4.5 Z" fill="#555"/></svg>
<div class="a" style="left:1159.8px;top:353.0px;width:138.0px;overflow:hidden;font-size:14.2px;line-height:16px;font-weight:bold;color:#000"><span style="display:inline-block;transform:scaleX(0.984);transform-origin:0 0">Beleg vorhanden</span></div>
<div class="a" style="left:1298.3px;top:351.5px;width:17px;height:17.5px;background:#F6F6F6;border:1px solid #C3C7CC;border-radius:1px"></div>
<svg style="left:1303.3px;top:358px" width="8" height="5" viewBox="0 0 8 5"><path d="M0 0 H8 L4 4.5 Z" fill="#555"/></svg>
<div class="a" style="left:1318.6px;top:353.0px;width:83.2px;overflow:hidden;font-size:14.2px;line-height:16px;font-weight:bold;color:#000"><span style="display:inline-block;transform:scaleX(0.979);transform-origin:0 0">Genehmiger</span></div>
<div class="a" style="left:1402.3px;top:351.5px;width:17px;height:17.5px;background:#F6F6F6;border:1px solid #C3C7CC;border-radius:1px"></div>
<svg style="left:1407.3px;top:358px" width="8" height="5" viewBox="0 0 8 5"><path d="M0 0 H8 L4 4.5 Z" fill="#555"/></svg>
<div class="a" style="left:1422.6px;top:353.0px;width:57.4px;overflow:hidden;font-size:14.2px;line-height:16px;font-weight:bold;color:#000"><span style="display:inline-block;transform:scaleX(0.959);transform-origin:0 0">Status</span></div>
<div class="a" style="left:1480.5px;top:351.5px;width:17px;height:17.5px;background:#F6F6F6;border:1px solid #C3C7CC;border-radius:1px"></div>
<svg style="left:1485.5px;top:358px" width="8" height="5" viewBox="0 0 8 5"><path d="M0 0 H8 L4 4.5 Z" fill="#555"/></svg>
<div class="a" style="right:1402.9px;top:373.6px;font-size:14.2px;line-height:16px;color:#000;transform:scaleX(0.961);transform-origin:100% 0">1001</div>
<div class="a" style="right:1402.9px;top:394.1px;font-size:14.2px;line-height:16px;color:#000;transform:scaleX(0.961);transform-origin:100% 0">1002</div>
<div class="a" style="right:1402.9px;top:414.6px;font-size:14.2px;line-height:16px;color:#000;transform:scaleX(0.961);transform-origin:100% 0">1003</div>
<div class="a" style="right:1402.9px;top:435.2px;font-size:14.2px;line-height:16px;color:#000;transform:scaleX(0.961);transform-origin:100% 0">1004</div>
<div class="a" style="right:1402.9px;top:455.8px;font-size:14.2px;line-height:16px;color:#000;transform:scaleX(0.961);transform-origin:100% 0">1005</div>
<div class="a" style="right:1402.9px;top:476.3px;font-size:14.2px;line-height:16px;color:#000;transform:scaleX(0.961);transform-origin:100% 0">1006</div>
<div class="a" style="right:1402.9px;top:496.9px;font-size:14.2px;line-height:16px;color:#000;transform:scaleX(0.961);transform-origin:100% 0">1007</div>
<div class="a" style="right:1402.9px;top:517.4px;font-size:14.2px;line-height:16px;color:#000;transform:scaleX(0.961);transform-origin:100% 0">1008</div>
<div class="a" style="right:1402.9px;top:538.0px;font-size:14.2px;line-height:16px;color:#000;transform:scaleX(0.961);transform-origin:100% 0">1009</div>
<div class="a" style="right:1402.9px;top:558.5px;font-size:14.2px;line-height:16px;color:#000;transform:scaleX(0.961);transform-origin:100% 0">1010</div>
<div class="a" style="right:1329.9px;top:373.6px;font-size:14.2px;line-height:16px;color:#000;transform:scaleX(0.950);transform-origin:100% 0">03.02.2026</div>
<div class="a" style="right:1329.9px;top:394.1px;font-size:14.2px;line-height:16px;color:#000;transform:scaleX(0.950);transform-origin:100% 0">04.02.2026</div>
<div class="a" style="right:1329.9px;top:414.6px;font-size:14.2px;line-height:16px;color:#000;transform:scaleX(0.950);transform-origin:100% 0">05.02.2026</div>
<div class="a" style="right:1329.9px;top:435.2px;font-size:14.2px;line-height:16px;color:#000;transform:scaleX(0.950);transform-origin:100% 0">06.02.2026</div>
<div class="a" style="right:1329.9px;top:455.8px;font-size:14.2px;line-height:16px;color:#000;transform:scaleX(0.950);transform-origin:100% 0">07.02.2026</div>
<div class="a" style="right:1329.9px;top:476.3px;font-size:14.2px;line-height:16px;color:#000;transform:scaleX(0.950);transform-origin:100% 0">10.02.2026</div>
<div class="a" style="right:1329.9px;top:496.9px;font-size:14.2px;line-height:16px;color:#000;transform:scaleX(0.950);transform-origin:100% 0">12.02.2026</div>
<div class="a" style="right:1329.9px;top:517.4px;font-size:14.2px;line-height:16px;color:#000;transform:scaleX(0.950);transform-origin:100% 0">13.02.2026</div>
<div class="a" style="right:1329.9px;top:538.0px;font-size:14.2px;line-height:16px;color:#000;transform:scaleX(0.950);transform-origin:100% 0">15.02.2026</div>
<div class="a" style="right:1329.9px;top:558.5px;font-size:14.2px;line-height:16px;color:#000;transform:scaleX(0.950);transform-origin:100% 0">18.02.2026</div>
<div class="a" style="left:175.4px;top:373.6px;font-size:14.2px;line-height:16px;color:#000;transform:scaleX(0.889);transform-origin:0 0">PRJ-210</div>
<div class="a" style="left:175.4px;top:394.1px;font-size:14.2px;line-height:16px;color:#000;transform:scaleX(0.889);transform-origin:0 0">PRJ-210</div>
<div class="a" style="left:175.4px;top:414.6px;font-size:14.2px;line-height:16px;color:#000;transform:scaleX(0.885);transform-origin:0 0">OPS-001</div>
<div class="a" style="left:175.4px;top:435.2px;font-size:14.2px;line-height:16px;color:#000;transform:scaleX(0.889);transform-origin:0 0">PRJ-198</div>
<div class="a" style="left:175.4px;top:455.8px;font-size:14.2px;line-height:16px;color:#000;transform:scaleX(0.889);transform-origin:0 0">PRJ-210</div>
<div class="a" style="left:175.4px;top:476.3px;font-size:14.2px;line-height:16px;color:#000;transform:scaleX(0.885);transform-origin:0 0">OPS-001</div>
<div class="a" style="left:175.4px;top:496.9px;font-size:14.2px;line-height:16px;color:#000;transform:scaleX(0.889);transform-origin:0 0">PRJ-305</div>
<div class="a" style="left:175.4px;top:517.4px;font-size:14.2px;line-height:16px;color:#000;transform:scaleX(0.889);transform-origin:0 0">PRJ-305</div>
<div class="a" style="left:175.4px;top:538.0px;font-size:14.2px;line-height:16px;color:#000;transform:scaleX(0.889);transform-origin:0 0">PRJ-210</div>
<div class="a" style="left:175.4px;top:558.5px;font-size:14.2px;line-height:16px;color:#000;transform:scaleX(0.885);transform-origin:0 0">OPS-001</div>
<div class="a" style="left:335.0px;top:373.6px;font-size:14.2px;line-height:16px;color:#000;transform:scaleX(1.031);transform-origin:0 0">Reisekosten</div>
<div class="a" style="left:335.0px;top:394.1px;font-size:14.2px;line-height:16px;color:#000;transform:scaleX(1.027);transform-origin:0 0">Bewirtung</div>
<div class="a" style="left:335.0px;top:414.6px;font-size:14.2px;line-height:16px;color:#000;transform:scaleX(1.030);transform-origin:0 0">Bürobedarf</div>
<div class="a" style="left:335.0px;top:435.2px;font-size:14.2px;line-height:16px;color:#000;transform:scaleX(1.022);transform-origin:0 0">Software</div>
<div class="a" style="left:335.0px;top:455.8px;font-size:14.2px;line-height:16px;color:#000;transform:scaleX(0.890);transform-origin:0 0">Taxi/ÖPNV</div>
<div class="a" style="left:335.0px;top:476.3px;font-size:14.2px;line-height:16px;color:#000;transform:scaleX(1.024);transform-origin:0 0">Telefon/Internet</div>
<div class="a" style="left:335.0px;top:496.9px;font-size:14.2px;line-height:16px;color:#000;transform:scaleX(0.990);transform-origin:0 0">Hotel</div>
<div class="a" style="left:335.0px;top:517.4px;font-size:14.2px;line-height:16px;color:#000;transform:scaleX(1.026);transform-origin:0 0">Sonstiges</div>
<div class="a" style="left:335.0px;top:538.0px;font-size:14.2px;line-height:16px;color:#000;transform:scaleX(1.007);transform-origin:0 0">Material</div>
<div class="a" style="left:335.0px;top:558.5px;font-size:14.2px;line-height:16px;color:#000;transform:scaleX(1.033);transform-origin:0 0">Fortbildung</div>
<div class="a" style="left:441.3px;top:373.6px;font-size:14.2px;line-height:16px;color:#000;transform:scaleX(1.007);transform-origin:0 0">Bahnfahrt Berlin–Hamburg</div>
<div class="a" style="left:441.3px;top:394.1px;font-size:14.2px;line-height:16px;color:#000;transform:scaleX(1.025);transform-origin:0 0">Kundentermin Lunch</div>
<div class="a" style="left:441.3px;top:414.6px;font-size:14.2px;line-height:16px;color:#000;transform:scaleX(1.006);transform-origin:0 0">Druckerpapier A4</div>
<div class="a" style="left:441.3px;top:435.2px;font-size:14.2px;line-height:16px;color:#000;transform:scaleX(0.990);transform-origin:0 0">Tool-Abo Februar</div>
<div class="a" style="left:441.3px;top:455.8px;font-size:14.2px;line-height:16px;color:#000;transform:scaleX(1.011);transform-origin:0 0">Taxi zum Bahnhof</div>
<div class="a" style="left:441.3px;top:476.3px;font-size:14.2px;line-height:16px;color:#000;transform:scaleX(1.016);transform-origin:0 0">Mobilfunk Rechnung</div>
<div class="a" style="left:441.3px;top:496.9px;font-size:14.2px;line-height:16px;color:#000;transform:scaleX(1.018);transform-origin:0 0">Übernachtung Messe</div>
<div class="a" style="left:441.3px;top:517.4px;font-size:14.2px;line-height:16px;color:#000;transform:scaleX(1.014);transform-origin:0 0">Parkgebühr Messe</div>
<div class="a" style="left:441.3px;top:538.0px;font-size:14.2px;line-height:16px;color:#000;transform:scaleX(0.986);transform-origin:0 0">Kabel &amp; Adapter</div>
<div class="a" style="left:441.3px;top:558.5px;font-size:14.2px;line-height:16px;color:#000;transform:scaleX(0.986);transform-origin:0 0">Online-Kurs</div>
<div class="a" style="left:618.6px;top:373.6px;font-size:14.2px;line-height:16px;color:#000;transform:scaleX(0.829);transform-origin:0 0">DB</div>
<div class="a" style="left:618.6px;top:394.1px;font-size:14.2px;line-height:16px;color:#000;transform:scaleX(0.976);transform-origin:0 0">Café Nord</div>
<div class="a" style="left:618.6px;top:414.6px;font-size:14.2px;line-height:16px;color:#000;transform:scaleX(0.980);transform-origin:0 0">OfficeMart</div>
<div class="a" style="left:618.6px;top:435.2px;font-size:14.2px;line-height:16px;color:#000;transform:scaleX(0.988);transform-origin:0 0">SoftCloud</div>
<div class="a" style="left:618.6px;top:455.8px;font-size:14.2px;line-height:16px;color:#000;transform:scaleX(1.011);transform-origin:0 0">TaxiZentrale</div>
<div class="a" style="left:618.6px;top:476.3px;font-size:14.2px;line-height:16px;color:#000;transform:scaleX(1.004);transform-origin:0 0">Telco</div>
<div class="a" style="left:618.6px;top:496.9px;font-size:14.2px;line-height:16px;color:#000;transform:scaleX(0.979);transform-origin:0 0">CityHotel</div>
<div class="a" style="left:618.6px;top:517.4px;font-size:14.2px;line-height:16px;color:#000;transform:scaleX(1.004);transform-origin:0 0">ParkService</div>
<div class="a" style="left:618.6px;top:538.0px;font-size:14.2px;line-height:16px;color:#000;transform:scaleX(0.997);transform-origin:0 0">TechStore</div>
<div class="a" style="left:618.6px;top:558.5px;font-size:14.2px;line-height:16px;color:#000;transform:scaleX(0.994);transform-origin:0 0">LearnHub</div>
<div class="a" style="left:703.1px;top:373.6px;font-size:14.2px;line-height:16px;color:#000;transform:scaleX(1.035);transform-origin:0 0">Firmenkarte</div>
<div class="a" style="left:703.1px;top:394.1px;font-size:14.2px;line-height:16px;color:#000;transform:scaleX(1.001);transform-origin:0 0">Privat</div>
<div class="a" style="left:703.1px;top:414.6px;font-size:14.2px;line-height:16px;color:#000;transform:scaleX(1.035);transform-origin:0 0">Firmenkarte</div>
<div class="a" style="left:703.1px;top:435.2px;font-size:14.2px;line-height:16px;color:#000;transform:scaleX(1.025);transform-origin:0 0">Rechnung</div>
<div class="a" style="left:703.1px;top:455.8px;font-size:14.2px;line-height:16px;color:#000;transform:scaleX(1.001);transform-origin:0 0">Privat</div>
<div class="a" style="left:703.1px;top:476.3px;font-size:14.2px;line-height:16px;color:#000;transform:scaleX(1.033);transform-origin:0 0">Lastschrift</div>
<div class="a" style="left:703.1px;top:496.9px;font-size:14.2px;line-height:16px;color:#000;transform:scaleX(1.001);transform-origin:0 0">Privat</div>
<div class="a" style="left:703.1px;top:517.4px;font-size:14.2px;line-height:16px;color:#000;transform:scaleX(1.001);transform-origin:0 0">Privat</div>
<div class="a" style="left:703.1px;top:538.0px;font-size:14.2px;line-height:16px;color:#000;transform:scaleX(1.035);transform-origin:0 0">Firmenkarte</div>
<div class="a" style="left:703.1px;top:558.5px;font-size:14.2px;line-height:16px;color:#000;transform:scaleX(1.025);transform-origin:0 0">Rechnung</div>
<div class="a" style="right:642.2px;top:373.6px;font-size:14.2px;line-height:16px;color:#000;transform:scaleX(0.950);transform-origin:100% 0">84,03</div>
<div class="a" style="right:642.2px;top:394.1px;font-size:14.2px;line-height:16px;color:#000;transform:scaleX(0.950);transform-origin:100% 0">29,41</div>
<div class="a" style="right:642.2px;top:414.6px;font-size:14.2px;line-height:16px;color:#000;transform:scaleX(0.950);transform-origin:100% 0">16,81</div>
<div class="a" style="right:642.2px;top:435.2px;font-size:14.2px;line-height:16px;color:#000;transform:scaleX(0.950);transform-origin:100% 0">41,18</div>
<div class="a" style="right:642.2px;top:455.8px;font-size:14.2px;line-height:16px;color:#000;transform:scaleX(0.950);transform-origin:100% 0">18,69</div>
<div class="a" style="right:642.2px;top:476.3px;font-size:14.2px;line-height:16px;color:#000;transform:scaleX(0.950);transform-origin:100% 0">25,21</div>
<div class="a" style="right:642.2px;top:496.9px;font-size:14.2px;line-height:16px;color:#000;transform:scaleX(0.952);transform-origin:100% 0">110,09</div>
<div class="a" style="right:642.2px;top:517.4px;font-size:14.2px;line-height:16px;color:#000;transform:scaleX(0.961);transform-origin:100% 0">10</div>
<div class="a" style="right:642.2px;top:538.0px;font-size:14.2px;line-height:16px;color:#000;transform:scaleX(0.950);transform-origin:100% 0">33,61</div>
<div class="a" style="right:642.2px;top:558.5px;font-size:14.2px;line-height:16px;color:#000;transform:scaleX(0.950);transform-origin:100% 0">75,63</div>
<div class="a" style="right:581.2px;top:373.6px;font-size:14.2px;line-height:16px;color:#000;transform:scaleX(0.961);transform-origin:100% 0">19</div>
<div class="a" style="right:581.2px;top:394.1px;font-size:14.2px;line-height:16px;color:#000;transform:scaleX(0.961);transform-origin:100% 0">19</div>
<div class="a" style="right:581.2px;top:414.6px;font-size:14.2px;line-height:16px;color:#000;transform:scaleX(0.961);transform-origin:100% 0">19</div>
<div class="a" style="right:581.2px;top:435.2px;font-size:14.2px;line-height:16px;color:#000;transform:scaleX(0.961);transform-origin:100% 0">19</div>
<div class="a" style="right:581.2px;top:455.8px;font-size:14.2px;line-height:16px;color:#000;transform:scaleX(0.961);transform-origin:100% 0">7</div>
<div class="a" style="right:581.2px;top:476.3px;font-size:14.2px;line-height:16px;color:#000;transform:scaleX(0.961);transform-origin:100% 0">19</div>
<div class="a" style="right:581.2px;top:496.9px;font-size:14.2px;line-height:16px;color:#000;transform:scaleX(0.961);transform-origin:100% 0">7</div>
<div class="a" style="right:581.2px;top:517.4px;font-size:14.2px;line-height:16px;color:#000;transform:scaleX(0.961);transform-origin:100% 0">0</div>
<div class="a" style="right:581.2px;top:538.0px;font-size:14.2px;line-height:16px;color:#000;transform:scaleX(0.961);transform-origin:100% 0">19</div>
<div class="a" style="right:581.2px;top:558.5px;font-size:14.2px;line-height:16px;color:#000;transform:scaleX(0.961);transform-origin:100% 0">19</div>
<div class="a" style="right:490.7px;top:373.6px;font-size:14.2px;line-height:16px;color:#000;transform:scaleX(0.950);transform-origin:100% 0">15,97</div>
<div class="a" style="right:490.7px;top:394.1px;font-size:14.2px;line-height:16px;color:#000;transform:scaleX(0.947);transform-origin:100% 0">5,59</div>
<div class="a" style="right:490.7px;top:414.6px;font-size:14.2px;line-height:16px;color:#000;transform:scaleX(0.947);transform-origin:100% 0">3,19</div>
<div class="a" style="right:490.7px;top:435.2px;font-size:14.2px;line-height:16px;color:#000;transform:scaleX(0.947);transform-origin:100% 0">7,82</div>
<div class="a" style="right:490.7px;top:455.8px;font-size:14.2px;line-height:16px;color:#000;transform:scaleX(0.947);transform-origin:100% 0">1,31</div>
<div class="a" style="right:490.7px;top:476.3px;font-size:14.2px;line-height:16px;color:#000;transform:scaleX(0.947);transform-origin:100% 0">4,79</div>
<div class="a" style="right:490.7px;top:496.9px;font-size:14.2px;line-height:16px;color:#000;transform:scaleX(0.947);transform-origin:100% 0">7,71</div>
<div class="a" style="right:490.7px;top:517.4px;font-size:14.2px;line-height:16px;color:#000;transform:scaleX(0.961);transform-origin:100% 0">0</div>
<div class="a" style="right:490.7px;top:538.0px;font-size:14.2px;line-height:16px;color:#000;transform:scaleX(0.947);transform-origin:100% 0">6,39</div>
<div class="a" style="right:490.7px;top:558.5px;font-size:14.2px;line-height:16px;color:#000;transform:scaleX(0.950);transform-origin:100% 0">14,37</div>
<div class="a" style="right:426.7px;top:373.6px;font-size:14.2px;line-height:16px;color:#000;transform:scaleX(0.961);transform-origin:100% 0">100</div>
<div class="a" style="right:426.7px;top:394.1px;font-size:14.2px;line-height:16px;color:#000;transform:scaleX(0.961);transform-origin:100% 0">35</div>
<div class="a" style="right:426.7px;top:414.6px;font-size:14.2px;line-height:16px;color:#000;transform:scaleX(0.961);transform-origin:100% 0">20</div>
<div class="a" style="right:426.7px;top:435.2px;font-size:14.2px;line-height:16px;color:#000;transform:scaleX(0.961);transform-origin:100% 0">49</div>
<div class="a" style="right:426.7px;top:455.8px;font-size:14.2px;line-height:16px;color:#000;transform:scaleX(0.961);transform-origin:100% 0">20</div>
<div class="a" style="right:426.7px;top:476.3px;font-size:14.2px;line-height:16px;color:#000;transform:scaleX(0.961);transform-origin:100% 0">30</div>
<div class="a" style="right:426.7px;top:496.9px;font-size:14.2px;line-height:16px;color:#000;transform:scaleX(0.950);transform-origin:100% 0">117,8</div>
<div class="a" style="right:426.7px;top:517.4px;font-size:14.2px;line-height:16px;color:#000;transform:scaleX(0.961);transform-origin:100% 0">10</div>
<div class="a" style="right:426.7px;top:538.0px;font-size:14.2px;line-height:16px;color:#000;transform:scaleX(0.961);transform-origin:100% 0">40</div>
<div class="a" style="right:426.7px;top:558.5px;font-size:14.2px;line-height:16px;color:#000;transform:scaleX(0.961);transform-origin:100% 0">90</div>
<div class="a" style="left:1078.6px;top:373.6px;font-size:14.2px;line-height:16px;color:#000;transform:scaleX(0.829);transform-origin:0 0">EUR</div>
<div class="a" style="left:1078.6px;top:394.1px;font-size:14.2px;line-height:16px;color:#000;transform:scaleX(0.829);transform-origin:0 0">EUR</div>
<div class="a" style="left:1078.6px;top:414.6px;font-size:14.2px;line-height:16px;color:#000;transform:scaleX(0.829);transform-origin:0 0">EUR</div>
<div class="a" style="left:1078.6px;top:435.2px;font-size:14.2px;line-height:16px;color:#000;transform:scaleX(0.829);transform-origin:0 0">EUR</div>
<div class="a" style="left:1078.6px;top:455.8px;font-size:14.2px;line-height:16px;color:#000;transform:scaleX(0.829);transform-origin:0 0">EUR</div>
<div class="a" style="left:1078.6px;top:476.3px;font-size:14.2px;line-height:16px;color:#000;transform:scaleX(0.829);transform-origin:0 0">EUR</div>
<div class="a" style="left:1078.6px;top:496.9px;font-size:14.2px;line-height:16px;color:#000;transform:scaleX(0.829);transform-origin:0 0">EUR</div>
<div class="a" style="left:1078.6px;top:517.4px;font-size:14.2px;line-height:16px;color:#000;transform:scaleX(0.829);transform-origin:0 0">EUR</div>
<div class="a" style="left:1078.6px;top:538.0px;font-size:14.2px;line-height:16px;color:#000;transform:scaleX(0.829);transform-origin:0 0">EUR</div>
<div class="a" style="left:1078.6px;top:558.5px;font-size:14.2px;line-height:16px;color:#000;transform:scaleX(0.829);transform-origin:0 0">EUR</div>
<div class="a" style="left:1159.8px;top:373.6px;font-size:14.2px;line-height:16px;color:#000;transform:scaleX(0.952);transform-origin:0 0">Ja</div>
<div class="a" style="left:1159.8px;top:394.1px;font-size:14.2px;line-height:16px;color:#000;transform:scaleX(0.952);transform-origin:0 0">Ja</div>
<div class="a" style="left:1159.8px;top:414.6px;font-size:14.2px;line-height:16px;color:#000;transform:scaleX(0.952);transform-origin:0 0">Ja</div>
<div class="a" style="left:1159.8px;top:435.2px;font-size:14.2px;line-height:16px;color:#000;transform:scaleX(0.980);transform-origin:0 0">Nein</div>
<div class="a" style="left:1159.8px;top:455.8px;font-size:14.2px;line-height:16px;color:#000;transform:scaleX(0.952);transform-origin:0 0">Ja</div>
<div class="a" style="left:1159.8px;top:476.3px;font-size:14.2px;line-height:16px;color:#000;transform:scaleX(0.952);transform-origin:0 0">Ja</div>
<div class="a" style="left:1159.8px;top:496.9px;font-size:14.2px;line-height:16px;color:#000;transform:scaleX(0.952);transform-origin:0 0">Ja</div>
<div class="a" style="left:1159.8px;top:517.4px;font-size:14.2px;line-height:16px;color:#000;transform:scaleX(0.980);transform-origin:0 0">Nein</div>
<div class="a" style="left:1159.8px;top:538.0px;font-size:14.2px;line-height:16px;color:#000;transform:scaleX(0.952);transform-origin:0 0">Ja</div>
<div class="a" style="left:1159.8px;top:558.5px;font-size:14.2px;line-height:16px;color:#000;transform:scaleX(0.952);transform-origin:0 0">Ja</div>
<div class="a" style="left:1318.6px;top:373.6px;font-size:14.2px;line-height:16px;color:#000;transform:scaleX(0.969);transform-origin:0 0">S. Nguyen</div>
<div class="a" style="left:1318.6px;top:394.1px;font-size:14.2px;line-height:16px;color:#000;transform:scaleX(0.957);transform-origin:0 0">M. Schulz</div>
<div class="a" style="left:1318.6px;top:414.6px;font-size:14.2px;line-height:16px;color:#000;transform:scaleX(0.962);transform-origin:0 0">K. Berger</div>
<div class="a" style="left:1318.6px;top:435.2px;font-size:14.2px;line-height:16px;color:#000;transform:scaleX(0.969);transform-origin:0 0">S. Nguyen</div>
<div class="a" style="left:1318.6px;top:455.8px;font-size:14.2px;line-height:16px;color:#000;transform:scaleX(0.957);transform-origin:0 0">M. Schulz</div>
<div class="a" style="left:1318.6px;top:476.3px;font-size:14.2px;line-height:16px;color:#000;transform:scaleX(0.962);transform-origin:0 0">K. Berger</div>
<div class="a" style="left:1318.6px;top:496.9px;font-size:14.2px;line-height:16px;color:#000;transform:scaleX(0.969);transform-origin:0 0">S. Nguyen</div>
<div class="a" style="left:1318.6px;top:517.4px;font-size:14.2px;line-height:16px;color:#000;transform:scaleX(0.969);transform-origin:0 0">S. Nguyen</div>
<div class="a" style="left:1318.6px;top:538.0px;font-size:14.2px;line-height:16px;color:#000;transform:scaleX(0.957);transform-origin:0 0">M. Schulz</div>
<div class="a" style="left:1318.6px;top:558.5px;font-size:14.2px;line-height:16px;color:#000;transform:scaleX(0.962);transform-origin:0 0">K. Berger</div>
<div class="a" style="left:1422.6px;top:373.6px;font-size:14.2px;line-height:16px;color:#000;transform:scaleX(1.031);transform-origin:0 0">Eingereicht</div>
<div class="a" style="left:1422.6px;top:394.1px;font-size:14.2px;line-height:16px;color:#000;transform:scaleX(1.002);transform-origin:0 0">In Prüfung</div>
<div class="a" style="left:1422.6px;top:414.6px;font-size:14.2px;line-height:16px;color:#000;transform:scaleX(1.025);transform-origin:0 0">Genehmigt</div>
<div class="a" style="left:1422.6px;top:435.2px;font-size:14.2px;line-height:16px;color:#000;transform:scaleX(1.025);transform-origin:0 0">Genehmigt</div>
<div class="a" style="left:1422.6px;top:455.8px;font-size:14.2px;line-height:16px;color:#000;transform:scaleX(1.031);transform-origin:0 0">Eingereicht</div>
<div class="a" style="left:1422.6px;top:476.3px;font-size:14.2px;line-height:16px;color:#000;transform:scaleX(1.002);transform-origin:0 0">In Prüfung</div>
<div class="a" style="left:1422.6px;top:496.9px;font-size:14.2px;line-height:16px;color:#000;transform:scaleX(1.031);transform-origin:0 0">Eingereicht</div>
<div class="a" style="left:1422.6px;top:517.4px;font-size:14.2px;line-height:16px;color:#000;transform:scaleX(1.025);transform-origin:0 0">Genehmigt</div>
<div class="a" style="left:1422.6px;top:538.0px;font-size:14.2px;line-height:16px;color:#000;transform:scaleX(1.027);transform-origin:0 0">Abgelehnt</div>
<div class="a" style="left:1422.6px;top:558.5px;font-size:14.2px;line-height:16px;color:#000;transform:scaleX(1.025);transform-origin:0 0">Genehmigt</div>
<div class="a" style="left:172.6px;top:369.5px;width:161.6px;height:207.5px;border:2px solid #107C41"></div>
<div class="a" style="left:174.6px;top:371.5px;width:157.6px;height:19.6px;border:1px solid #fff;border-bottom:none;border-left-width:1px"></div>
<div class="a" style="left:174.6px;top:390.1px;width:157.6px;height:1px;background:#BDBDBD"></div>
<div class="a" style="left:330.5px;top:573.5px;width:5px;height:5px;background:#107C41;border:1px solid #fff"></div>
</div>
<!--/GRID-->

<!--MENU-->
<div class="a" style="left:1000px;top:163px;width:289px;height:312.5px;background:#fff;border:1px solid #777;border-radius:5px;box-shadow:0 3px 8px rgba(0,0,0,.16)"></div>
<div class="a" style="left:999px;top:163px;width:291px;height:47px;background:#F2F2F2;border:2.5px solid #EE7F12;border-radius:6px"></div>
<svg style="left:1016px;top:176px" width="32" height="29" viewBox="0 0 32 29"><rect x="0.6" y="0.6" width="28" height="22" fill="#fff" stroke="#424242" stroke-width="1.2"/><path d="M7.5 0.6 V22.6 M21.5 0.6 V22.6 M0.6 8 H28.6 M0.6 15.5 H28.6" stroke="#666" stroke-width="1"/><rect x="7.5" y="8" width="14" height="7.5" fill="#FCE0A0" stroke="#E8801A" stroke-width="1.3"/><rect x="12.6" y="13.1" width="18.5" height="14" fill="#fff" stroke="#424242" stroke-width="1.2"/><path d="M24.5 16.5 L18.5 19.3 L24.5 22 M18.5 24.3 H24.5" fill="none" stroke="#424242" stroke-width="1.1"/></svg>
<div class="a" style="left:1053px;top:183.1px;font-size:12.2px;line-height:15px;font-weight:bold;color:#1a1a1a">Regeln zum <u>H</u>ervorheben von Zellen</div>
<svg style="left:1273px;top:182px" width="7" height="11" viewBox="0 0 7 11"><path d="M1 1 L6 5.5 L1 10" fill="none" stroke="#424242" stroke-width="1.2"/></svg>
<svg style="left:1016px;top:220px" width="32" height="29" viewBox="0 0 32 29"><rect x="0.6" y="0.6" width="28" height="22" fill="#fff" stroke="#424242" stroke-width="1.2"/><rect x="7.5" y="0.6" width="14" height="22" fill="#FCE0A0"/><path d="M0.6 8 H28.6 M0.6 15.5 H28.6" stroke="#424242" stroke-width="1"/><path d="M7.5 0.6 V22.6 M21.5 0.6 V22.6" stroke="#E8801A" stroke-width="1.3"/><path d="M14.5 14 V2.5 M10.5 6.5 L14.5 2.5 L18.5 6.5" fill="none" stroke="#424242" stroke-width="1.2"/><rect x="12.6" y="13.1" width="18.5" height="14" fill="#fff" stroke="#424242" stroke-width="1.2"/><text x="15.3" y="24.8" font-size="10.5" font-family="Liberation Sans" fill="#555">10</text></svg>
<div class="a" style="left:1053px;top:226.6px;font-size:12.5px;line-height:15px;font-weight:bold;color:#1a1a1a">Regeln für <u>o</u>berste/unterste Werte</div>
<svg style="left:1273px;top:225px" width="7" height="11" viewBox="0 0 7 11"><path d="M1 1 L6 5.5 L1 10" fill="none" stroke="#424242" stroke-width="1.2"/></svg>
<div class="a" style="left:1047px;top:254px;width:241px;height:1px;background:#D6D6D6"></div>
<svg style="left:1016px;top:266px" width="32" height="24" viewBox="0 0 32 24"><rect x="0.6" y="0.6" width="28" height="22" fill="#fff" stroke="#424242" stroke-width="1.2"/><path d="M0.6 8 H28.6 M0.6 15.5 H28.6 M6 0.6 V22.6 M23.5 0.6 V22.6" stroke="#424242" stroke-width="1"/><rect x="6" y="1.2" width="7.5" height="6.3" fill="#8DC2EE" stroke="#1E8BDC" stroke-width="1"/><rect x="6" y="8.5" width="3" height="6.5" fill="#8DC2EE" stroke="#1E8BDC" stroke-width="1"/><rect x="6" y="16" width="5.5" height="6" fill="#8DC2EE" stroke="#1E8BDC" stroke-width="1"/></svg>
<div class="a" style="left:1053px;top:272.5px;font-size:12.2px;line-height:15px;font-weight:bold;color:#1a1a1a"><u>D</u>atenbalken</div>
<svg style="left:1273px;top:271px" width="7" height="11" viewBox="0 0 7 11"><path d="M1 1 L6 5.5 L1 10" fill="none" stroke="#424242" stroke-width="1.2"/></svg>
<svg style="left:1016px;top:309px" width="32" height="24" viewBox="0 0 32 24"><rect x="0.6" y="0.6" width="28" height="22" fill="#fff" stroke="#424242" stroke-width="1.2"/><path d="M0.6 8 H28.6 M0.6 15.5 H28.6 M5 0.6 V22.6 M24 0.6 V22.6" stroke="#424242" stroke-width="1"/><rect x="5.5" y="1.2" width="18" height="6.3" fill="#8DC2EE" stroke="#1E8BDC" stroke-width="1"/><rect x="5.5" y="8.5" width="18" height="6.5" fill="#FCE0A0" stroke="#E8801A" stroke-width="1"/><rect x="5.5" y="16" width="18" height="6" fill="#F4A3AE" stroke="#D13438" stroke-width="1"/></svg>
<div class="a" style="left:1053px;top:315.6px;font-size:12.3px;line-height:15px;font-weight:bold;color:#1a1a1a"><u>F</u>arbskalen</div>
<svg style="left:1273px;top:314px" width="7" height="11" viewBox="0 0 7 11"><path d="M1 1 L6 5.5 L1 10" fill="none" stroke="#424242" stroke-width="1.2"/></svg>
<svg style="left:1016px;top:352.5px" width="32" height="24" viewBox="0 0 32 24"><rect x="0.6" y="0.6" width="28" height="22" fill="#fff" stroke="#424242" stroke-width="1.2"/><path d="M0.6 8 H28.6 M0.6 15.5 H28.6 M5 0.6 V22.6 M24 0.6 V22.6" stroke="#424242" stroke-width="1"/><circle cx="9" cy="4.3" r="1.3" fill="#1E8BDC"/><circle cx="9" cy="11.8" r="1.3" fill="#D13438"/><circle cx="9" cy="19.2" r="1.3" fill="#1E8BDC"/><path d="M13 4.3 H20 M13 11.8 H20 M13 19.2 H20" stroke="#424242" stroke-width="1"/></svg>
<div class="a" style="left:1053px;top:358.9px;font-size:12.3px;line-height:15px;font-weight:bold;color:#1a1a1a"><u>S</u>ymbolsätze</div>
<svg style="left:1273px;top:358px" width="7" height="11" viewBox="0 0 7 11"><path d="M1 1 L6 5.5 L1 10" fill="none" stroke="#424242" stroke-width="1.2"/></svg>
<div class="a" style="left:1001px;top:387px;width:287px;height:1px;background:#D6D6D6"></div>
<svg style="left:1012px;top:394px" width="20" height="17" viewBox="0 0 20 17"><g transform="translate(0 0)"><rect x="2.6" y="1.6" width="14.5" height="13" rx="1" fill="#fff" stroke="#555" stroke-width="1.2"/><path d="M6.5 1.6 V14.6 M13.5 1.6 V14.6 M2.6 5.5 H17 M2.6 10.5 H17" stroke="#777" stroke-width="0.9" stroke-dasharray="1.2 1"/><rect x="6.5" y="5.5" width="7" height="5" fill="#F8C880" stroke="#E8801A" stroke-width="1.3"/></g></svg>
<div class="a" style="left:1040.6px;top:395.6px;font-size:11.8px;line-height:15px;color:#1a1a1a"><u>N</u>eue Regel...</div>
<svg style="left:1012px;top:422px" width="20" height="18" viewBox="0 0 20 18"><g transform="translate(0 0)"><rect x="2.6" y="1.6" width="14.5" height="13" rx="1" fill="#fff" stroke="#555" stroke-width="1.2"/><path d="M6.5 1.6 V14.6 M13.5 1.6 V14.6 M2.6 5.5 H17 M2.6 10.5 H17" stroke="#777" stroke-width="0.9" stroke-dasharray="1.2 1"/><rect x="6.5" y="5.5" width="7" height="5" fill="#F8C880" stroke="#E8801A" stroke-width="1.3"/></g><rect x="9" y="9.5" width="10" height="5.5" rx="0.8" fill="#C890D8" stroke="#A23BB3" stroke-width="1.3" transform="rotate(-45 14 12.25)"/><path d="M12.5 12.5 L15.5 9.5" stroke="#fff" stroke-width="1"/></svg>
<div class="a" style="left:1040.6px;top:424.2px;font-size:11.8px;line-height:15px;color:#1a1a1a">Regeln lös<u>c</u>hen</div>
<svg style="left:1273px;top:425px" width="7" height="11" viewBox="0 0 7 11"><path d="M1 1 L6 5.5 L1 10" fill="none" stroke="#424242" stroke-width="1.2"/></svg>
<svg style="left:1012px;top:450px" width="21" height="18" viewBox="0 0 21 18"><path d="M2.6 1.6 H15.5 M2.6 1.6 V15" stroke="#555" stroke-width="1"/><g transform="translate(2 2)"><rect x="2.6" y="1.6" width="14.5" height="13" rx="1" fill="#fff" stroke="#555" stroke-width="1.2"/><path d="M6.5 1.6 V14.6 M13.5 1.6 V14.6 M2.6 5.5 H17 M2.6 10.5 H17" stroke="#777" stroke-width="0.9" stroke-dasharray="1.2 1"/><rect x="6.5" y="5.5" width="7" height="5" fill="#F8C880" stroke="#E8801A" stroke-width="1.3"/></g></svg>
<div class="a" style="left:1040.6px;top:453.0px;font-size:11.8px;line-height:15px;color:#1a1a1a"><u>R</u>egeln verwalten...</div>
<div class="a" style="left:1288px;top:166px;width:181px;height:338px;background:#fff;border:1px solid #777;border-radius:5px;box-shadow:0 3px 8px rgba(0,0,0,.16)"></div>
<svg style="left:1303.5px;top:178.5px" width="32" height="29" viewBox="0 0 32 29"><rect x="0.6" y="0.6" width="28" height="22" fill="#fff" stroke="#424242" stroke-width="1.2"/><path d="M7.5 0.6 V22.6 M21.5 0.6 V22.6 M0.6 8 H28.6 M0.6 15.5 H28.6" stroke="#666" stroke-width="1"/><rect x="7.5" y="8" width="14" height="7.5" fill="#FCE0A0" stroke="#E8801A" stroke-width="1.3"/><rect x="12.6" y="13.1" width="18.5" height="14" fill="#fff" stroke="#424242" stroke-width="1.2"/><path d="M18.5 17 L24.5 20.3 L18.5 23.6" fill="none" stroke="#424242" stroke-width="1.1"/></svg>
<div class="a" style="left:1340px;top:182.4px;font-size:11.9px;line-height:15px;font-weight:bold;color:#1a1a1a">Größe<u>r</u> als...</div>
<svg style="left:1303.5px;top:222px" width="32" height="29" viewBox="0 0 32 29"><rect x="0.6" y="0.6" width="28" height="22" fill="#fff" stroke="#424242" stroke-width="1.2"/><path d="M7.5 0.6 V22.6 M21.5 0.6 V22.6 M0.6 8 H28.6 M0.6 15.5 H28.6" stroke="#666" stroke-width="1"/><rect x="7.5" y="8" width="14" height="7.5" fill="#FCE0A0" stroke="#E8801A" stroke-width="1.3"/><rect x="12.6" y="13.1" width="18.5" height="14" fill="#fff" stroke="#424242" stroke-width="1.2"/><path d="M24.5 17 L18.5 20.3 L24.5 23.6" fill="none" stroke="#424242" stroke-width="1.1"/></svg>
<div class="a" style="left:1340px;top:225.6px;font-size:11.9px;line-height:15px;font-weight:bold;color:#1a1a1a"><u>K</u>leiner als...</div>
<svg style="left:1303.5px;top:265px" width="32" height="24" viewBox="0 0 32 24"><rect x="0.6" y="0.6" width="28" height="22" fill="#fff" stroke="#424242" stroke-width="1.2"/><rect x="0.6" y="0.6" width="7" height="7.4" fill="#8DC2EE"/><rect x="21.5" y="0.6" width="7" height="7.4" fill="#8DC2EE"/><rect x="7.5" y="8" width="14" height="7.5" fill="#FCE0A0"/><path d="M7.5 0.6 V22.6 M21.5 0.6 V22.6 M0.6 15.5 H28.6" stroke="#424242" stroke-width="1"/><path d="M0.6 8 H7.5 M21.5 8 H28.6" stroke="#1E8BDC" stroke-width="1.3"/><path d="M7.5 15.5 V8 H21.5" fill="none" stroke="#E8801A" stroke-width="1.3"/></svg>
<div class="a" style="left:1340px;top:268.9px;font-size:11.9px;line-height:15px;font-weight:bold;color:#1a1a1a"><u>Z</u>wischen...</div>
<svg style="left:1303.5px;top:308.5px" width="32" height="29" viewBox="0 0 32 29"><rect x="0.6" y="0.6" width="28" height="22" fill="#fff" stroke="#424242" stroke-width="1.2"/><path d="M7.5 0.6 V22.6 M21.5 0.6 V22.6 M0.6 8 H28.6 M0.6 15.5 H28.6" stroke="#666" stroke-width="1"/><rect x="7.5" y="8" width="14" height="7.5" fill="#FCE0A0" stroke="#E8801A" stroke-width="1.3"/><rect x="12.6" y="13.1" width="18.5" height="14" fill="#fff" stroke="#424242" stroke-width="1.2"/><path d="M18.5 19 H24.5 M18.5 22 H24.5" stroke="#424242" stroke-width="1.1"/></svg>
<div class="a" style="left:1340px;top:312.3px;font-size:11.9px;line-height:15px;font-weight:bold;color:#1a1a1a"><u>G</u>leich...</div>
<svg style="left:1303.5px;top:351.5px" width="32" height="29" viewBox="0 0 32 29"><rect x="0.6" y="0.6" width="28" height="22" fill="#fff" stroke="#424242" stroke-width="1.2"/><path d="M7.5 0.6 V22.6 M21.5 0.6 V22.6 M0.6 8 H28.6 M0.6 15.5 H28.6" stroke="#666" stroke-width="1"/><rect x="7.5" y="8" width="14" height="7.5" fill="#FCE0A0" stroke="#E8801A" stroke-width="1.3"/><rect x="12.6" y="13.1" width="18.5" height="14" fill="#fff" stroke="#424242" stroke-width="1.2"/><text x="17" y="25.3" font-size="13" font-family="Liberation Sans" fill="#424242">a</text></svg>
<div class="a" style="left:1340px;top:356.2px;font-size:11.9px;line-height:15px;font-weight:bold;color:#1a1a1a"><u>T</u>extinhalt...</div>
<svg style="left:1303.5px;top:394.5px" width="32" height="29" viewBox="0 0 32 29"><rect x="0.6" y="0.6" width="28" height="22" fill="#fff" stroke="#424242" stroke-width="1.2"/><path d="M7.5 0.6 V22.6 M21.5 0.6 V22.6 M0.6 8 H28.6 M0.6 15.5 H28.6" stroke="#666" stroke-width="1"/><rect x="7.5" y="8" width="14" height="7.5" fill="#FCE0A0" stroke="#E8801A" stroke-width="1.3"/><rect x="15.6" y="13.6" width="15" height="14" fill="#fff" stroke="#424242" stroke-width="1.2"/><path d="M15.6 16.8 H30.6" stroke="#424242" stroke-width="1.1"/><path d="M19 12 V15 M27 12 V15" stroke="#424242" stroke-width="1.2"/></svg>
<div class="a" style="left:1340px;top:398.8px;font-size:11.9px;line-height:15px;font-weight:bold;color:#1a1a1a">D<u>a</u>tum...</div>
<div class="a" style="left:1288px;top:427px;width:180px;height:47.5px;background:#fff;border:2.5px solid #EE7F12;border-radius:6px"></div>
<svg style="left:1304px;top:437.5px" width="32" height="24" viewBox="0 0 32 24"><rect x="0.6" y="0.6" width="28" height="22" fill="#fff" stroke="#424242" stroke-width="1.2"/><rect x="7.5" y="0.6" width="14" height="7.4" fill="#FCE0A0"/><rect x="7.5" y="15.5" width="14" height="7" fill="#FCE0A0"/><path d="M0.6 8 H28.6 M0.6 15.5 H28.6" stroke="#424242" stroke-width="1"/><path d="M7.5 0.6 V22.6 M21.5 0.6 V22.6" stroke="#E8801A" stroke-width="1.3"/></svg>
<div class="a" style="left:1340.3px;top:441.6px;font-size:12.5px;line-height:15px;font-weight:bold;color:#1a1a1a"><u>D</u>oppelte Werte...</div>
<div class="a" style="left:1327.8px;top:480.6px;font-size:11.8px;line-height:15px;color:#1a1a1a"><u>W</u>eitere Regeln...</div>
<!--/MENU-->
</body></html>
